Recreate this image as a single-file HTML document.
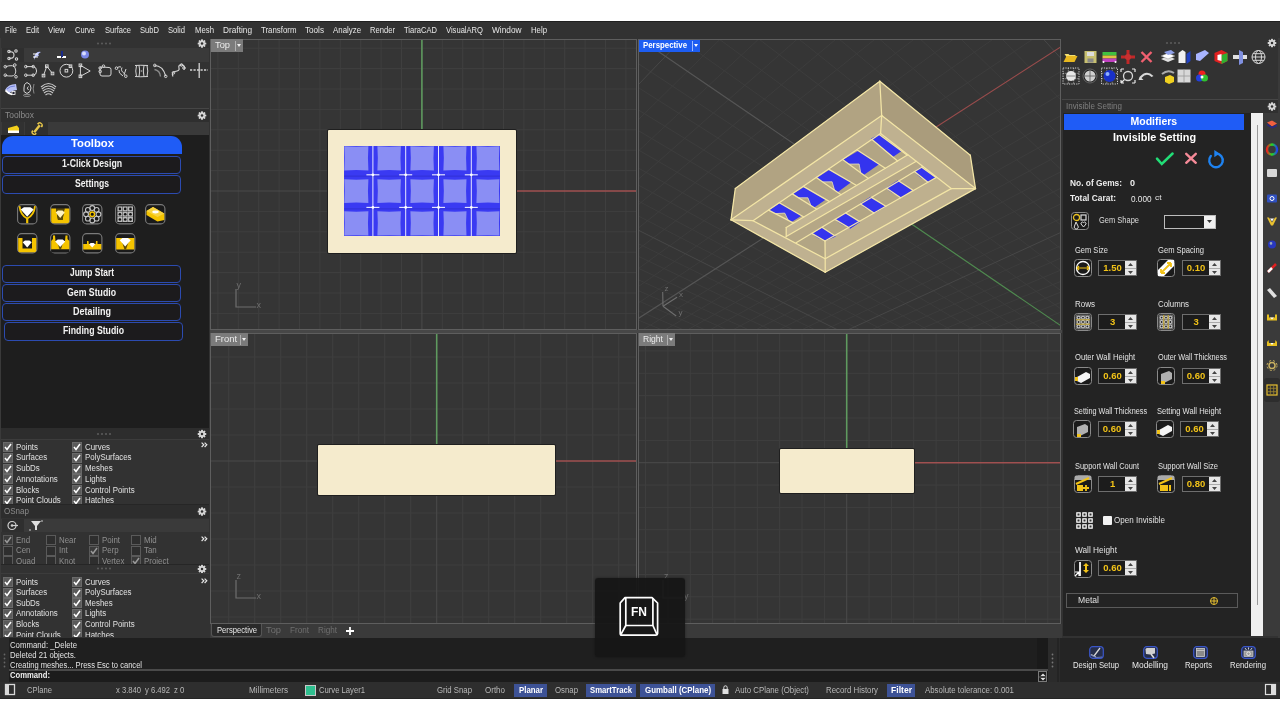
<!DOCTYPE html>
<html><head><meta charset="utf-8">
<style>
*{box-sizing:border-box;margin:0;padding:0}
html,body{width:1280px;height:720px;overflow:hidden;background:#fff}
body{position:relative;font-family:"Liberation Sans",sans-serif;color:#ddd}
.a{position:absolute}
.t{position:absolute;white-space:nowrap;line-height:1}
svg{overflow:visible}
</style></head><body><div style="position:absolute;left:0;top:0;width:1280px;height:720px;will-change:transform">
<div class="a" style="left:0px;top:21px;width:1280px;height:1px;background:#202020;"></div>
<div class="a" style="left:0px;top:22px;width:1280px;height:17px;background:#323232;"></div>
<div class="t" style="left:5.0px;top:26.0px;font-size:9px;color:#e6e6e6;transform:scaleX(0.828);transform-origin:0 0;">File</div>
<div class="t" style="left:26.0px;top:26.0px;font-size:9px;color:#e6e6e6;transform:scaleX(0.838);transform-origin:0 0;">Edit</div>
<div class="t" style="left:48.0px;top:26.0px;font-size:9px;color:#e6e6e6;transform:scaleX(0.879);transform-origin:0 0;">View</div>
<div class="t" style="left:75.0px;top:26.0px;font-size:9px;color:#e6e6e6;transform:scaleX(0.833);transform-origin:0 0;">Curve</div>
<div class="t" style="left:105.0px;top:26.0px;font-size:9px;color:#e6e6e6;transform:scaleX(0.838);transform-origin:0 0;">Surface</div>
<div class="t" style="left:140.0px;top:26.0px;font-size:9px;color:#e6e6e6;transform:scaleX(0.844);transform-origin:0 0;">SubD</div>
<div class="t" style="left:168.0px;top:26.0px;font-size:9px;color:#e6e6e6;transform:scaleX(0.849);transform-origin:0 0;">Solid</div>
<div class="t" style="left:195.0px;top:26.0px;font-size:9px;color:#e6e6e6;transform:scaleX(0.863);transform-origin:0 0;">Mesh</div>
<div class="t" style="left:223.0px;top:26.0px;font-size:9px;color:#e6e6e6;transform:scaleX(0.920);transform-origin:0 0;">Drafting</div>
<div class="t" style="left:261.0px;top:26.0px;font-size:9px;color:#e6e6e6;transform:scaleX(0.873);transform-origin:0 0;">Transform</div>
<div class="t" style="left:305.0px;top:26.0px;font-size:9px;color:#e6e6e6;transform:scaleX(0.904);transform-origin:0 0;">Tools</div>
<div class="t" style="left:333.0px;top:26.0px;font-size:9px;color:#e6e6e6;transform:scaleX(0.875);transform-origin:0 0;">Analyze</div>
<div class="t" style="left:370.0px;top:26.0px;font-size:9px;color:#e6e6e6;transform:scaleX(0.847);transform-origin:0 0;">Render</div>
<div class="t" style="left:404.0px;top:26.0px;font-size:9px;color:#e6e6e6;transform:scaleX(0.842);transform-origin:0 0;">TiaraCAD</div>
<div class="t" style="left:446.0px;top:26.0px;font-size:9px;color:#e6e6e6;transform:scaleX(0.844);transform-origin:0 0;">VisualARQ</div>
<div class="t" style="left:492.0px;top:26.0px;font-size:9px;color:#e6e6e6;transform:scaleX(0.922);transform-origin:0 0;">Window</div>
<div class="t" style="left:531.0px;top:26.0px;font-size:9px;color:#e6e6e6;transform:scaleX(0.864);transform-origin:0 0;">Help</div>
<div class="a" style="left:0px;top:39px;width:210px;height:599px;background:#323232;"></div>
<div class="a" style="left:0px;top:38px;width:1px;height:600px;background:#3a3a3a;"></div>
<svg class="a" style="left:0px;top:38px;" width="210" height="70" viewBox="0 0 210 70"><circle cx="98" cy="5.5" r="1.1" fill="#5a5a5a"/><circle cx="102" cy="5.5" r="1.1" fill="#5a5a5a"/><circle cx="106" cy="5.5" r="1.1" fill="#5a5a5a"/><circle cx="110" cy="5.5" r="1.1" fill="#5a5a5a"/><g transform="translate(202,5.5)" fill="#d6d6d6"><rect x="-1" y="-4.3" width="2" height="2.6" rx="0.6" transform="rotate(0)"/><rect x="-1" y="-4.3" width="2" height="2.6" rx="0.6" transform="rotate(45)"/><rect x="-1" y="-4.3" width="2" height="2.6" rx="0.6" transform="rotate(90)"/><rect x="-1" y="-4.3" width="2" height="2.6" rx="0.6" transform="rotate(135)"/><rect x="-1" y="-4.3" width="2" height="2.6" rx="0.6" transform="rotate(180)"/><rect x="-1" y="-4.3" width="2" height="2.6" rx="0.6" transform="rotate(225)"/><rect x="-1" y="-4.3" width="2" height="2.6" rx="0.6" transform="rotate(270)"/><rect x="-1" y="-4.3" width="2" height="2.6" rx="0.6" transform="rotate(315)"/><circle r="3.0"/><circle r="1.25" fill="#303030"/></g></svg>
<div class="a" style="left:1px;top:48px;width:208px;height:14px;background:#3a3a3a;"></div>
<div class="a" style="left:2px;top:48px;width:22px;height:14px;background:#2f2f2f;"></div>
<svg class="a" style="left:0px;top:48px;" width="100" height="14" viewBox="0 0 100 14">
<g stroke="#d8d8d8" fill="none" stroke-width="1.1">
<path d="M9 4 Q14 3 14 7 Q14 11 9 10"/><circle cx="9" cy="3.5" r="1.2"/><circle cx="16" cy="3" r="1.2"/><circle cx="9" cy="10.5" r="1.2"/><circle cx="16.5" cy="11" r="1.2"/>
</g>
<path d="M34 9 Q36 3 41 4 Q37 6 39 8 Q35 8 34 12 Z" fill="#b9c3ff"/><path d="M33 6 h5 M33 9 h5" stroke="#fff" stroke-width="1.2"/>
<rect x="57" y="8" width="4" height="2" fill="#fff"/><rect x="62" y="8" width="4" height="2" fill="#fff"/><rect x="61" y="3" width="2" height="6" fill="#1a2a8a"/>
<circle cx="85" cy="6.5" r="4" fill="#7a86e8"/><circle cx="84" cy="5.5" r="2" fill="#d8dcff"/>
</svg>
<svg class="a" style="left:0px;top:63px;" width="210" height="16" viewBox="0 0 210 16">
<g stroke="#d4d4d4" fill="none" stroke-width="1">
<path d="M5.3 3.8 Q9 2.4 12.3 2.7 Q15.8 3.5 15.8 8 Q15.6 12.6 12 13 Q8 13.2 5.3 12.4"/>
<circle cx="5.3" cy="3.7" r="1.3"/><circle cx="14.8" cy="2" r="1.3"/><circle cx="5.3" cy="12.2" r="1.3"/><circle cx="16" cy="13.8" r="1.3"/>
<path d="M25.8 3.6 H33.2 Q36.6 4 36.6 8 Q36.5 12 33.2 12.2 H25.8"/>
<circle cx="25.8" cy="3.6" r="1.3"/><circle cx="33.2" cy="3.6" r="1.3"/><circle cx="25.8" cy="12.2" r="1.3"/><circle cx="33.2" cy="12.2" r="1.3"/>
<path d="M43.5 12.6 L46.8 3.2 L52.5 10.5"/>
<rect x="42.2" y="11.3" width="2.6" height="2.6"/><rect x="45.5" y="1.9" width="2.6" height="2.6"/><rect x="51.2" y="9.2" width="2.6" height="2.6"/>
<circle cx="66.4" cy="7.7" r="6.4"/><rect x="65.1" y="6.4" width="2.6" height="2.6"/><rect x="69.2" y="1.9" width="2.6" height="2.6"/>
<path d="M80.4 2.3 L90.2 8 L80.4 13.3 Z"/><rect x="79.1" y="1" width="2.6" height="2.6"/><rect x="79.1" y="12" width="2.6" height="2.6"/>
<path d="M100 5.5 Q100 4 102 4 L109 4.5 Q111 4.5 111 6.5 L111 11 Q111 13 109 13 L102 13 Q100 13 100 11 Z"/>
<circle cx="100.2" cy="5" r="1.3"/><circle cx="100.2" cy="8.5" r="1.3"/><circle cx="103.5" cy="3.2" r="1.3"/>
<path d="M117 5 Q119 3 121 4 M119 7 Q118 10 123 13 M122 4.5 Q120 8 125 11 M126 6 L124 12"/><circle cx="116.5" cy="5.2" r="1.3"/><circle cx="125.8" cy="13.2" r="1.3"/>
<path d="M135 2.5 Q140 2 148 2.5 M135 13.5 Q140 14 148 13.5 M136.5 2.5 Q135 8 136.5 13.5 M139 2.5 Q140.5 8 139 13.5 M144 2.5 Q142.5 8 144 13.5 M147 2.5 Q148.5 8 147 13.5"/><path d="M139 8 H144" stroke-dasharray="1 1"/>
<path d="M154.5 2.5 Q163 2.5 165.7 13.2" stroke-width="1.2"/><path d="M154.5 6.5 Q160 7.5 160.5 13.5" stroke="#8a8a8a" stroke-width="1.4"/><circle cx="154.8" cy="2.4" r="1.3"/><circle cx="165.7" cy="13.3" r="1.3"/>
<path d="M173 13.5 Q171 9.5 175 8.5 Q180 8 179 5 Q178 1.5 182 1.8 Q185.5 2.5 184 6.5" stroke-width="1.2"/><circle cx="173.5" cy="9.8" r="1.3"/><circle cx="184" cy="5" r="1.3"/><circle cx="181.5" cy="2" r="1.3"/>
<path d="M199.2 0 V15" stroke-width="1.3"/><path d="M190 7 H208" stroke-dasharray="2.2 1.3" stroke-width="1.3"/>
</g></svg>
<svg class="a" style="left:3px;top:80.5px;" width="100" height="16" viewBox="0 0 100 16">
<path d="M2 9 Q5 3 13 3 L14 9 Q8 9.5 6 13 Z" fill="#b8c0f4"/><path d="M2.5 9.5 Q5 12.5 9 13.5" stroke="#ffffff" stroke-width="1.8" fill="none"/><path d="M4 8 Q7 5 12 5" stroke="#6070d0" stroke-width="0.8" fill="none"/><rect x="9" y="10.5" width="3" height="3" fill="#223" stroke="#fff" stroke-width="0.8"/>
<g stroke="#d4d4d4" fill="none" stroke-width="1"><path d="M24 1.5 L27 3.5 L28 7 L27 10.5 L24 12.5 L21 10.5 L21 7 L21.5 3.5 Z"/><path d="M25.5 5.5 Q23 7 25.5 9"/><ellipse cx="24" cy="14.3" rx="3.5" ry="1.1" stroke="#999"/><path d="M31 3 Q29.3 8 31 12.5" stroke="#888"/></g>
<g stroke="#c8c8c8" fill="none" stroke-width="1.1"><path d="M38 6 Q45.5 -1 53 6"/><path d="M38.8 8 Q45.5 2 52.2 8"/><path d="M39.8 10 Q45.5 5 51.2 10"/><path d="M41 12 Q45.5 8 50 12"/><path d="M42.5 14 Q45.5 11.5 48.5 14"/></g>
</svg>
<div class="a" style="left:1px;top:108px;width:208px;height:1px;background:#464646;"></div>
<div class="a" style="left:1px;top:109px;width:208px;height:13px;background:#2f2f2f;"></div>
<div class="t" style="left:5.0px;top:110.7px;font-size:9px;color:#8a8a8a;transform:scaleX(0.935);transform-origin:0 0;">Toolbox</div>
<svg class="a" style="left:0px;top:108px;" width="210" height="14" viewBox="0 0 210 14"><g transform="translate(202,7.5)" fill="#d6d6d6"><rect x="-1" y="-4.3" width="2" height="2.6" rx="0.6" transform="rotate(0)"/><rect x="-1" y="-4.3" width="2" height="2.6" rx="0.6" transform="rotate(45)"/><rect x="-1" y="-4.3" width="2" height="2.6" rx="0.6" transform="rotate(90)"/><rect x="-1" y="-4.3" width="2" height="2.6" rx="0.6" transform="rotate(135)"/><rect x="-1" y="-4.3" width="2" height="2.6" rx="0.6" transform="rotate(180)"/><rect x="-1" y="-4.3" width="2" height="2.6" rx="0.6" transform="rotate(225)"/><rect x="-1" y="-4.3" width="2" height="2.6" rx="0.6" transform="rotate(270)"/><rect x="-1" y="-4.3" width="2" height="2.6" rx="0.6" transform="rotate(315)"/><circle r="3.0"/><circle r="1.25" fill="#303030"/></g></svg>
<div class="a" style="left:1px;top:122px;width:208px;height:13px;background:#3a3a3a;"></div>
<div class="a" style="left:2px;top:122px;width:22px;height:13px;background:#313131;"></div>
<div class="a" style="left:25px;top:122px;width:23px;height:13px;background:#2f2f2f;"></div>
<svg class="a" style="left:0px;top:122px;" width="60" height="13" viewBox="0 0 60 13">
<path d="M8 6 L17 3.5 L19 6 L19 9 L8 9 Z" fill="#f3cf1c"/><rect x="8" y="8.5" width="11" height="2.5" fill="#fff"/>
<g transform="translate(37,6.8) rotate(-52)"><rect x="-4.5" y="-1.2" width="9" height="2.4" fill="#e6c64a"/><path d="M4 -3.2 Q7.5 -3.2 7.5 0 Q7.5 3.2 4 3.2 L4 1.3 L6 1.3 L6 -1.3 L4 -1.3 Z" fill="#e6c64a"/><path d="M-4 -3 Q-7.2 -3 -7.2 0 Q-7.2 3 -4 3 L-4 1.2 L-5.6 1.2 L-5.6 -1.2 L-4 -1.2 Z" fill="#e6c64a"/></g>
</svg>
<div class="a" style="left:1px;top:135px;width:208px;height:293px;background:#1e1e1e;"></div>
<div class="a" style="left:2px;top:136px;width:180px;height:18px;background:#1f5cf6;border-radius:11px 11px 0 0"></div>
<div class="t" style="left:70.5px;top:138.2px;font-size:11px;color:#ffffff;font-weight:bold;transform:scaleX(1.025);transform-origin:0 0;">Toolbox</div>
<div class="a" style="left:2px;top:155.5px;width:179px;height:18.5px;background:#1c1b1d;border:1px solid #2c4bb0;border-radius:4px"></div>
<div class="t" style="left:61.5px;top:159.4px;font-size:10px;color:#f2f2f2;font-weight:bold;transform:scaleX(0.871);transform-origin:0 0;">1-Click Design</div>
<div class="a" style="left:2px;top:175px;width:179px;height:19px;background:#1c1b1d;border:1px solid #2c4bb0;border-radius:4px"></div>
<div class="t" style="left:74.5px;top:179.2px;font-size:10px;color:#f2f2f2;font-weight:bold;transform:scaleX(0.862);transform-origin:0 0;">Settings</div>
<svg class="a" style="left:17px;top:203.5px;" width="21" height="21" viewBox="0 0 21 21"><rect x="0.6" y="0.6" width="19.3" height="19.3" rx="4" fill="#1a1a1a" stroke="#7a7a7a" stroke-width="1.1"/><path d="M2.5 2.2 Q3.5 11.5 10.2 14.5 Q17 11.5 18 2.2" stroke="#f5c400" stroke-width="1.8" fill="none"/><path d="M10.2 14 V19.2" stroke="#f5c400" stroke-width="2.2"/><path d="M3.6999999999999993 5.575 L6.949999999999999 3.2 L13.45 3.2 L16.7 5.575 L10.2 12.7 Z" fill="#ffffff"/></svg>
<svg class="a" style="left:50px;top:203.5px;" width="21" height="21" viewBox="0 0 21 21"><rect x="0.6" y="0.6" width="19.3" height="19.3" rx="4" fill="#1a1a1a" stroke="#7a7a7a" stroke-width="1.1"/><path d="M1.2 4.5 H6 L8 16 H12.5 L14.5 4.5 H19.3 V17 Q19.3 19.3 17 19.3 H3.5 Q1.2 19.3 1.2 17 Z" fill="#f5c400"/><path d="M6 4.5 H14.5 L12.5 16 H8 Z" fill="#5c4a0a"/><path d="M5.699999999999999 8.375 L7.949999999999999 6.5 L12.45 6.5 L14.7 8.375 L10.2 14.0 Z" fill="#fff3c0"/></svg>
<svg class="a" style="left:82px;top:203.5px;" width="21" height="21" viewBox="0 0 21 21"><rect x="0.6" y="0.6" width="19.3" height="19.3" rx="4" fill="#1a1a1a" stroke="#7a7a7a" stroke-width="1.1"/><circle cx="16.45" cy="10.25" r="2.4" fill="none" stroke="#c4c4c4" stroke-width="1.1"/><circle cx="14.63" cy="14.63" r="2.4" fill="none" stroke="#c4c4c4" stroke-width="1.1"/><circle cx="10.25" cy="16.45" r="2.4" fill="none" stroke="#c4c4c4" stroke-width="1.1"/><circle cx="5.87" cy="14.63" r="2.4" fill="none" stroke="#c4c4c4" stroke-width="1.1"/><circle cx="4.05" cy="10.25" r="2.4" fill="none" stroke="#c4c4c4" stroke-width="1.1"/><circle cx="5.87" cy="5.87" r="2.4" fill="none" stroke="#c4c4c4" stroke-width="1.1"/><circle cx="10.25" cy="4.05" r="2.4" fill="none" stroke="#c4c4c4" stroke-width="1.1"/><circle cx="14.63" cy="5.87" r="2.4" fill="none" stroke="#c4c4c4" stroke-width="1.1"/><circle cx="10.25" cy="10.25" r="2.3" fill="#111" stroke="#f5c400" stroke-width="1.4"/></svg>
<svg class="a" style="left:115px;top:203.5px;" width="21" height="21" viewBox="0 0 21 21"><rect x="0.6" y="0.6" width="19.3" height="19.3" rx="4" fill="#1a1a1a" stroke="#7a7a7a" stroke-width="1.1"/><rect x="2.4" y="2.4" width="5" height="5" fill="#b8b8b8"/><circle cx="4.9" cy="4.9" r="1.3" fill="#111"/><rect x="2.4" y="7.7" width="5" height="5" fill="#b8b8b8"/><circle cx="4.9" cy="10.2" r="1.3" fill="#111"/><rect x="2.4" y="13.0" width="5" height="5" fill="#b8b8b8"/><circle cx="4.9" cy="15.5" r="1.3" fill="#111"/><rect x="7.7" y="2.4" width="5" height="5" fill="#b8b8b8"/><circle cx="10.2" cy="4.9" r="1.3" fill="#111"/><rect x="7.7" y="7.7" width="5" height="5" fill="#b8b8b8"/><circle cx="10.2" cy="10.2" r="1.3" fill="#111"/><rect x="7.7" y="13.0" width="5" height="5" fill="#b8b8b8"/><circle cx="10.2" cy="15.5" r="1.3" fill="#111"/><rect x="13.0" y="2.4" width="5" height="5" fill="#b8b8b8"/><circle cx="15.5" cy="4.9" r="1.3" fill="#111"/><rect x="13.0" y="7.7" width="5" height="5" fill="#b8b8b8"/><circle cx="15.5" cy="10.2" r="1.3" fill="#111"/><rect x="13.0" y="13.0" width="5" height="5" fill="#b8b8b8"/><circle cx="15.5" cy="15.5" r="1.3" fill="#111"/></svg>
<svg class="a" style="left:145px;top:203.5px;" width="21" height="21" viewBox="0 0 21 21"><rect x="0.6" y="0.6" width="19.3" height="19.3" rx="4" fill="#1a1a1a" stroke="#7a7a7a" stroke-width="1.1"/><path d="M1.5 7 L8 3 L19.3 9.5 L19.3 16 L12.5 17.5 L1.5 11 Z" fill="#f5c400"/><path d="M1.5 7 L8 3 L19.3 9.5 L12.5 13 Z" fill="#f8d440"/><ellipse cx="10.5" cy="8" rx="3.2" ry="1.4" fill="#fff"/></svg>
<svg class="a" style="left:17px;top:232.5px;" width="21" height="21" viewBox="0 0 21 21"><rect x="0.6" y="0.6" width="19.3" height="19.3" rx="4" fill="#1a1a1a" stroke="#7a7a7a" stroke-width="1.1"/><path d="M1.2 5 H5.5 V15.5 H15 V5 H19.3 V17.5 Q19.3 19.3 17.5 19.3 H3 Q1.2 19.3 1.2 17.5 Z" fill="#f5c400"/><path d="M5.699999999999999 9.25 L7.949999999999999 7.5 L12.45 7.5 L14.7 9.25 L10.2 14.5 Z" fill="#ffffff"/></svg>
<svg class="a" style="left:50px;top:232.5px;" width="21" height="21" viewBox="0 0 21 21"><rect x="0.6" y="0.6" width="19.3" height="19.3" rx="4" fill="#1a1a1a" stroke="#7a7a7a" stroke-width="1.1"/><path d="M1.2 16.5 V8 L3 6 L3 2.5 L5 2.5 L5.5 8 H15 L15.5 2.5 L17.5 2.5 L17.5 6 L19.3 8 V16.5 Z" fill="#f5c400"/><path d="M7 8 H13.5 L11 16.5 H9.5 Z" fill="#5c4a0a"/><path d="M5.199999999999999 8.375 L7.699999999999999 6.5 L12.7 6.5 L15.2 8.375 L10.2 14.0 Z" fill="#ffffff"/><rect x="1.2" y="16.5" width="18.1" height="2.8" fill="#1a1a1a"/></svg>
<svg class="a" style="left:82px;top:232.5px;" width="21" height="21" viewBox="0 0 21 21"><rect x="0.6" y="0.6" width="19.3" height="19.3" rx="4" fill="#1a1a1a" stroke="#7a7a7a" stroke-width="1.1"/><path d="M1.2 11 H5 L5 8 L6.5 8 L6.8 11 H13.7 L14 8 L15.5 8 L15.5 11 H19.3 V16.5 H1.2 Z" fill="#f5c400"/><path d="M7.199999999999999 11.125 L8.7 10 L11.7 10 L13.2 11.125 L10.2 14.5 Z" fill="#ffffff"/></svg>
<svg class="a" style="left:115px;top:232.5px;" width="21" height="21" viewBox="0 0 21 21"><rect x="0.6" y="0.6" width="19.3" height="19.3" rx="4" fill="#1a1a1a" stroke="#7a7a7a" stroke-width="1.1"/><path d="M1.2 5 H19.3 V16.5 H1.2 Z" fill="#f5c400"/><path d="M7 9 H13.5 L11 16.5 H9.5 Z" fill="#5c4a0a"/><path d="M4.699999999999999 7.125 L7.449999999999999 5 L12.95 5 L15.7 7.125 L10.2 13.5 Z" fill="#ffffff"/></svg>
<div class="a" style="left:2px;top:264.5px;width:179px;height:18.5px;background:#1c1b1d;border:1px solid #2c4bb0;border-radius:4px"></div>
<div class="t" style="left:69.5px;top:268.4px;font-size:10px;color:#f2f2f2;font-weight:bold;transform:scaleX(0.842);transform-origin:0 0;">Jump Start</div>
<div class="a" style="left:2px;top:284px;width:179px;height:18px;background:#1c1b1d;border:1px solid #2c4bb0;border-radius:4px"></div>
<div class="t" style="left:67.0px;top:287.7px;font-size:10px;color:#f2f2f2;font-weight:bold;transform:scaleX(0.873);transform-origin:0 0;">Gem Studio</div>
<div class="a" style="left:2px;top:303px;width:179px;height:18px;background:#1c1b1d;border:1px solid #2c4bb0;border-radius:4px"></div>
<div class="t" style="left:72.5px;top:306.7px;font-size:10px;color:#f2f2f2;font-weight:bold;transform:scaleX(0.900);transform-origin:0 0;">Detailing</div>
<div class="a" style="left:4px;top:322px;width:179px;height:19px;background:#1c1b1d;border:1px solid #2c4bb0;border-radius:4px"></div>
<div class="t" style="left:63.0px;top:326.2px;font-size:10px;color:#f2f2f2;font-weight:bold;transform:scaleX(0.872);transform-origin:0 0;">Finding Studio</div>
<div class="a" style="left:1px;top:428px;width:208px;height:11px;background:#2d2d2d;"></div>
<svg class="a" style="left:0px;top:428px;" width="210" height="12" viewBox="0 0 210 12"><circle cx="98" cy="6" r="1.1" fill="#5a5a5a"/><circle cx="102" cy="6" r="1.1" fill="#5a5a5a"/><circle cx="106" cy="6" r="1.1" fill="#5a5a5a"/><circle cx="110" cy="6" r="1.1" fill="#5a5a5a"/><g transform="translate(202,6)" fill="#d6d6d6"><rect x="-1" y="-4.3" width="2" height="2.6" rx="0.6" transform="rotate(0)"/><rect x="-1" y="-4.3" width="2" height="2.6" rx="0.6" transform="rotate(45)"/><rect x="-1" y="-4.3" width="2" height="2.6" rx="0.6" transform="rotate(90)"/><rect x="-1" y="-4.3" width="2" height="2.6" rx="0.6" transform="rotate(135)"/><rect x="-1" y="-4.3" width="2" height="2.6" rx="0.6" transform="rotate(180)"/><rect x="-1" y="-4.3" width="2" height="2.6" rx="0.6" transform="rotate(225)"/><rect x="-1" y="-4.3" width="2" height="2.6" rx="0.6" transform="rotate(270)"/><rect x="-1" y="-4.3" width="2" height="2.6" rx="0.6" transform="rotate(315)"/><circle r="3.0"/><circle r="1.25" fill="#303030"/></g></svg>
<div class="a" style="left:1px;top:439px;width:208px;height:1px;background:#3c3c3c;"></div>
<svg class="a" style="left:3px;top:442.2px;" width="10" height="10" viewBox="0 0 10 10"><rect x="0.5" y="0.5" width="9" height="9" fill="#5a5a5a" stroke="#6a6a6a" stroke-width="1"/><path d="M2 5 L4 7.5 L8 2" stroke="#ffffff" stroke-width="1.5" fill="none"/></svg>
<svg class="a" style="left:72px;top:442.2px;" width="10" height="10" viewBox="0 0 10 10"><rect x="0.5" y="0.5" width="9" height="9" fill="#5a5a5a" stroke="#6a6a6a" stroke-width="1"/><path d="M2 5 L4 7.5 L8 2" stroke="#ffffff" stroke-width="1.5" fill="none"/></svg>
<div class="t" style="left:16.0px;top:442.7px;font-size:8.5px;color:#e0e0e0;transform:scaleX(0.930);transform-origin:0 0;">Points</div>
<div class="t" style="left:85.0px;top:442.7px;font-size:8.5px;color:#e0e0e0;transform:scaleX(0.930);transform-origin:0 0;">Curves</div>
<svg class="a" style="left:3px;top:452.9px;" width="10" height="10" viewBox="0 0 10 10"><rect x="0.5" y="0.5" width="9" height="9" fill="#5a5a5a" stroke="#6a6a6a" stroke-width="1"/><path d="M2 5 L4 7.5 L8 2" stroke="#ffffff" stroke-width="1.5" fill="none"/></svg>
<svg class="a" style="left:72px;top:452.9px;" width="10" height="10" viewBox="0 0 10 10"><rect x="0.5" y="0.5" width="9" height="9" fill="#5a5a5a" stroke="#6a6a6a" stroke-width="1"/><path d="M2 5 L4 7.5 L8 2" stroke="#ffffff" stroke-width="1.5" fill="none"/></svg>
<div class="t" style="left:16.0px;top:453.4px;font-size:8.5px;color:#e0e0e0;transform:scaleX(0.930);transform-origin:0 0;">Surfaces</div>
<div class="t" style="left:85.0px;top:453.4px;font-size:8.5px;color:#e0e0e0;transform:scaleX(0.930);transform-origin:0 0;">PolySurfaces</div>
<svg class="a" style="left:3px;top:463.59999999999997px;" width="10" height="10" viewBox="0 0 10 10"><rect x="0.5" y="0.5" width="9" height="9" fill="#5a5a5a" stroke="#6a6a6a" stroke-width="1"/><path d="M2 5 L4 7.5 L8 2" stroke="#ffffff" stroke-width="1.5" fill="none"/></svg>
<svg class="a" style="left:72px;top:463.59999999999997px;" width="10" height="10" viewBox="0 0 10 10"><rect x="0.5" y="0.5" width="9" height="9" fill="#5a5a5a" stroke="#6a6a6a" stroke-width="1"/><path d="M2 5 L4 7.5 L8 2" stroke="#ffffff" stroke-width="1.5" fill="none"/></svg>
<div class="t" style="left:16.0px;top:464.1px;font-size:8.5px;color:#e0e0e0;transform:scaleX(0.930);transform-origin:0 0;">SubDs</div>
<div class="t" style="left:85.0px;top:464.1px;font-size:8.5px;color:#e0e0e0;transform:scaleX(0.930);transform-origin:0 0;">Meshes</div>
<svg class="a" style="left:3px;top:474.29999999999995px;" width="10" height="10" viewBox="0 0 10 10"><rect x="0.5" y="0.5" width="9" height="9" fill="#5a5a5a" stroke="#6a6a6a" stroke-width="1"/><path d="M2 5 L4 7.5 L8 2" stroke="#ffffff" stroke-width="1.5" fill="none"/></svg>
<svg class="a" style="left:72px;top:474.29999999999995px;" width="10" height="10" viewBox="0 0 10 10"><rect x="0.5" y="0.5" width="9" height="9" fill="#5a5a5a" stroke="#6a6a6a" stroke-width="1"/><path d="M2 5 L4 7.5 L8 2" stroke="#ffffff" stroke-width="1.5" fill="none"/></svg>
<div class="t" style="left:16.0px;top:474.8px;font-size:8.5px;color:#e0e0e0;transform:scaleX(0.930);transform-origin:0 0;">Annotations</div>
<div class="t" style="left:85.0px;top:474.8px;font-size:8.5px;color:#e0e0e0;transform:scaleX(0.930);transform-origin:0 0;">Lights</div>
<svg class="a" style="left:3px;top:485.0px;" width="10" height="10" viewBox="0 0 10 10"><rect x="0.5" y="0.5" width="9" height="9" fill="#5a5a5a" stroke="#6a6a6a" stroke-width="1"/><path d="M2 5 L4 7.5 L8 2" stroke="#ffffff" stroke-width="1.5" fill="none"/></svg>
<svg class="a" style="left:72px;top:485.0px;" width="10" height="10" viewBox="0 0 10 10"><rect x="0.5" y="0.5" width="9" height="9" fill="#5a5a5a" stroke="#6a6a6a" stroke-width="1"/><path d="M2 5 L4 7.5 L8 2" stroke="#ffffff" stroke-width="1.5" fill="none"/></svg>
<div class="t" style="left:16.0px;top:485.5px;font-size:8.5px;color:#e0e0e0;transform:scaleX(0.930);transform-origin:0 0;">Blocks</div>
<div class="t" style="left:85.0px;top:485.5px;font-size:8.5px;color:#e0e0e0;transform:scaleX(0.930);transform-origin:0 0;">Control Points</div>
<svg class="a" style="left:3px;top:495.7px;" width="10" height="10" viewBox="0 0 10 10"><rect x="0.5" y="0.5" width="9" height="9" fill="#5a5a5a" stroke="#6a6a6a" stroke-width="1"/><path d="M2 5 L4 7.5 L8 2" stroke="#ffffff" stroke-width="1.5" fill="none"/></svg>
<svg class="a" style="left:72px;top:495.7px;" width="10" height="10" viewBox="0 0 10 10"><rect x="0.5" y="0.5" width="9" height="9" fill="#5a5a5a" stroke="#6a6a6a" stroke-width="1"/><path d="M2 5 L4 7.5 L8 2" stroke="#ffffff" stroke-width="1.5" fill="none"/></svg>
<div class="t" style="left:16.0px;top:496.2px;font-size:8.5px;color:#e0e0e0;transform:scaleX(0.930);transform-origin:0 0;">Point Clouds</div>
<div class="t" style="left:85.0px;top:496.2px;font-size:8.5px;color:#e0e0e0;transform:scaleX(0.930);transform-origin:0 0;">Hatches</div>
<svg class="a" style="left:200.5px;top:441.5px;" width="8" height="6" viewBox="0 0 8 6"><path d="M0.6 0.6 L2.8 2.8 L0.6 5 M3.6 0.6 L5.8 2.8 L3.6 5" stroke="#e8e8e8" stroke-width="1.2" fill="none"/></svg>
<div class="a" style="left:1px;top:504px;width:208px;height:1px;background:#262626;"></div>
<div class="a" style="left:1px;top:505px;width:208px;height:13px;background:#2d2d2d;"></div>
<div class="t" style="left:4.0px;top:506.7px;font-size:9px;color:#8a8a8a;transform:scaleX(0.892);transform-origin:0 0;">OSnap</div>
<svg class="a" style="left:0px;top:505px;" width="210" height="13" viewBox="0 0 210 13"><g transform="translate(202,6.5)" fill="#d6d6d6"><rect x="-1" y="-4.3" width="2" height="2.6" rx="0.6" transform="rotate(0)"/><rect x="-1" y="-4.3" width="2" height="2.6" rx="0.6" transform="rotate(45)"/><rect x="-1" y="-4.3" width="2" height="2.6" rx="0.6" transform="rotate(90)"/><rect x="-1" y="-4.3" width="2" height="2.6" rx="0.6" transform="rotate(135)"/><rect x="-1" y="-4.3" width="2" height="2.6" rx="0.6" transform="rotate(180)"/><rect x="-1" y="-4.3" width="2" height="2.6" rx="0.6" transform="rotate(225)"/><rect x="-1" y="-4.3" width="2" height="2.6" rx="0.6" transform="rotate(270)"/><rect x="-1" y="-4.3" width="2" height="2.6" rx="0.6" transform="rotate(315)"/><circle r="3.0"/><circle r="1.25" fill="#303030"/></g></svg>
<div class="a" style="left:1px;top:519px;width:208px;height:13px;background:#3a3a3a;"></div>
<div class="a" style="left:2px;top:519px;width:22px;height:13px;background:#2f2f2f;"></div>
<svg class="a" style="left:0px;top:519px;" width="60" height="13" viewBox="0 0 60 13">
<g stroke="#d0d0d0" fill="none" stroke-width="1.2"><circle cx="12" cy="6.5" r="4"/><path d="M12 6.5 H18"/></g><circle cx="12" cy="6.5" r="1.3" fill="#d0d0d0"/>
<path d="M31 2 H41 L37 7 V11 H35 V7 Z" fill="#e0e0e0"/><circle cx="42" cy="2" r="0.8" fill="#e0e0e0"/><circle cx="30" cy="11" r="0.8" fill="#e0e0e0"/>
</svg>
<div class="a" style="left:0;top:533px;width:210px;height:31px;overflow:hidden">
<svg class="a" style="left:3px;top:2.0px;" width="10" height="10" viewBox="0 0 10 10"><rect x="0.5" y="0.5" width="9" height="9" fill="#3a3a3a" stroke="#5a5a5a" stroke-width="1"/><path d="M2 5 L4 7.5 L8 2" stroke="#9a9a9a" stroke-width="1.5" fill="none"/></svg>
<div class="t" style="left:16.0px;top:2.5px;font-size:8.5px;color:#8f8f8f;transform:scaleX(0.930);transform-origin:0 0;">End</div>
<svg class="a" style="left:46px;top:2.0px;" width="10" height="10" viewBox="0 0 10 10"><rect x="0.5" y="0.5" width="9" height="9" fill="#2e2e2e" stroke="#5a5a5a" stroke-width="1"/></svg>
<div class="t" style="left:59.0px;top:2.5px;font-size:8.5px;color:#8f8f8f;transform:scaleX(0.930);transform-origin:0 0;">Near</div>
<svg class="a" style="left:88.5px;top:2.0px;" width="10" height="10" viewBox="0 0 10 10"><rect x="0.5" y="0.5" width="9" height="9" fill="#2e2e2e" stroke="#5a5a5a" stroke-width="1"/></svg>
<div class="t" style="left:101.5px;top:2.5px;font-size:8.5px;color:#8f8f8f;transform:scaleX(0.930);transform-origin:0 0;">Point</div>
<svg class="a" style="left:131px;top:2.0px;" width="10" height="10" viewBox="0 0 10 10"><rect x="0.5" y="0.5" width="9" height="9" fill="#2e2e2e" stroke="#5a5a5a" stroke-width="1"/></svg>
<div class="t" style="left:144.0px;top:2.5px;font-size:8.5px;color:#8f8f8f;transform:scaleX(0.930);transform-origin:0 0;">Mid</div>
<svg class="a" style="left:3px;top:12.700000000000045px;" width="10" height="10" viewBox="0 0 10 10"><rect x="0.5" y="0.5" width="9" height="9" fill="#2e2e2e" stroke="#5a5a5a" stroke-width="1"/></svg>
<div class="t" style="left:16.0px;top:13.2px;font-size:8.5px;color:#8f8f8f;transform:scaleX(0.930);transform-origin:0 0;">Cen</div>
<svg class="a" style="left:46px;top:12.700000000000045px;" width="10" height="10" viewBox="0 0 10 10"><rect x="0.5" y="0.5" width="9" height="9" fill="#2e2e2e" stroke="#5a5a5a" stroke-width="1"/></svg>
<div class="t" style="left:59.0px;top:13.2px;font-size:8.5px;color:#8f8f8f;transform:scaleX(0.930);transform-origin:0 0;">Int</div>
<svg class="a" style="left:88.5px;top:12.700000000000045px;" width="10" height="10" viewBox="0 0 10 10"><rect x="0.5" y="0.5" width="9" height="9" fill="#3a3a3a" stroke="#5a5a5a" stroke-width="1"/><path d="M2 5 L4 7.5 L8 2" stroke="#9a9a9a" stroke-width="1.5" fill="none"/></svg>
<div class="t" style="left:101.5px;top:13.2px;font-size:8.5px;color:#8f8f8f;transform:scaleX(0.930);transform-origin:0 0;">Perp</div>
<svg class="a" style="left:131px;top:12.700000000000045px;" width="10" height="10" viewBox="0 0 10 10"><rect x="0.5" y="0.5" width="9" height="9" fill="#2e2e2e" stroke="#5a5a5a" stroke-width="1"/></svg>
<div class="t" style="left:144.0px;top:13.2px;font-size:8.5px;color:#8f8f8f;transform:scaleX(0.930);transform-origin:0 0;">Tan</div>
<svg class="a" style="left:3px;top:23.399999999999977px;" width="10" height="10" viewBox="0 0 10 10"><rect x="0.5" y="0.5" width="9" height="9" fill="#2e2e2e" stroke="#5a5a5a" stroke-width="1"/></svg>
<div class="t" style="left:16.0px;top:23.9px;font-size:8.5px;color:#8f8f8f;transform:scaleX(0.930);transform-origin:0 0;">Quad</div>
<svg class="a" style="left:46px;top:23.399999999999977px;" width="10" height="10" viewBox="0 0 10 10"><rect x="0.5" y="0.5" width="9" height="9" fill="#2e2e2e" stroke="#5a5a5a" stroke-width="1"/></svg>
<div class="t" style="left:59.0px;top:23.9px;font-size:8.5px;color:#8f8f8f;transform:scaleX(0.930);transform-origin:0 0;">Knot</div>
<svg class="a" style="left:88.5px;top:23.399999999999977px;" width="10" height="10" viewBox="0 0 10 10"><rect x="0.5" y="0.5" width="9" height="9" fill="#2e2e2e" stroke="#5a5a5a" stroke-width="1"/></svg>
<div class="t" style="left:101.5px;top:23.9px;font-size:8.5px;color:#8f8f8f;transform:scaleX(0.930);transform-origin:0 0;">Vertex</div>
<svg class="a" style="left:131px;top:23.399999999999977px;" width="10" height="10" viewBox="0 0 10 10"><rect x="0.5" y="0.5" width="9" height="9" fill="#3a3a3a" stroke="#5a5a5a" stroke-width="1"/><path d="M2 5 L4 7.5 L8 2" stroke="#9a9a9a" stroke-width="1.5" fill="none"/></svg>
<div class="t" style="left:144.0px;top:23.9px;font-size:8.5px;color:#8f8f8f;transform:scaleX(0.930);transform-origin:0 0;">Project</div>
</div>
<svg class="a" style="left:200.5px;top:535.5px;" width="8" height="6" viewBox="0 0 8 6"><path d="M0.6 0.6 L2.8 2.8 L0.6 5 M3.6 0.6 L5.8 2.8 L3.6 5" stroke="#e8e8e8" stroke-width="1.2" fill="none"/></svg>
<div class="a" style="left:1px;top:564px;width:208px;height:1px;background:#262626;"></div>
<svg class="a" style="left:0px;top:564px;" width="210" height="10" viewBox="0 0 210 10"><circle cx="98" cy="4.5" r="1.1" fill="#5a5a5a"/><circle cx="102" cy="4.5" r="1.1" fill="#5a5a5a"/><circle cx="106" cy="4.5" r="1.1" fill="#5a5a5a"/><circle cx="110" cy="4.5" r="1.1" fill="#5a5a5a"/><g transform="translate(202,5)" fill="#d6d6d6"><rect x="-1" y="-4.3" width="2" height="2.6" rx="0.6" transform="rotate(0)"/><rect x="-1" y="-4.3" width="2" height="2.6" rx="0.6" transform="rotate(45)"/><rect x="-1" y="-4.3" width="2" height="2.6" rx="0.6" transform="rotate(90)"/><rect x="-1" y="-4.3" width="2" height="2.6" rx="0.6" transform="rotate(135)"/><rect x="-1" y="-4.3" width="2" height="2.6" rx="0.6" transform="rotate(180)"/><rect x="-1" y="-4.3" width="2" height="2.6" rx="0.6" transform="rotate(225)"/><rect x="-1" y="-4.3" width="2" height="2.6" rx="0.6" transform="rotate(270)"/><rect x="-1" y="-4.3" width="2" height="2.6" rx="0.6" transform="rotate(315)"/><circle r="3.0"/><circle r="1.25" fill="#303030"/></g></svg>
<div class="a" style="left:1px;top:573px;width:208px;height:1px;background:#3c3c3c;"></div>
<div class="a" style="left:0;top:574px;width:210px;height:63px;overflow:hidden">
<svg class="a" style="left:3px;top:3.0px;" width="10" height="10" viewBox="0 0 10 10"><rect x="0.5" y="0.5" width="9" height="9" fill="#5a5a5a" stroke="#6a6a6a" stroke-width="1"/><path d="M2 5 L4 7.5 L8 2" stroke="#ffffff" stroke-width="1.5" fill="none"/></svg>
<svg class="a" style="left:72px;top:3.0px;" width="10" height="10" viewBox="0 0 10 10"><rect x="0.5" y="0.5" width="9" height="9" fill="#5a5a5a" stroke="#6a6a6a" stroke-width="1"/><path d="M2 5 L4 7.5 L8 2" stroke="#ffffff" stroke-width="1.5" fill="none"/></svg>
<div class="t" style="left:16.0px;top:3.5px;font-size:8.5px;color:#e0e0e0;transform:scaleX(0.930);transform-origin:0 0;">Points</div>
<div class="t" style="left:85.0px;top:3.5px;font-size:8.5px;color:#e0e0e0;transform:scaleX(0.930);transform-origin:0 0;">Curves</div>
<svg class="a" style="left:3px;top:13.649999999999977px;" width="10" height="10" viewBox="0 0 10 10"><rect x="0.5" y="0.5" width="9" height="9" fill="#5a5a5a" stroke="#6a6a6a" stroke-width="1"/><path d="M2 5 L4 7.5 L8 2" stroke="#ffffff" stroke-width="1.5" fill="none"/></svg>
<svg class="a" style="left:72px;top:13.649999999999977px;" width="10" height="10" viewBox="0 0 10 10"><rect x="0.5" y="0.5" width="9" height="9" fill="#5a5a5a" stroke="#6a6a6a" stroke-width="1"/><path d="M2 5 L4 7.5 L8 2" stroke="#ffffff" stroke-width="1.5" fill="none"/></svg>
<div class="t" style="left:16.0px;top:14.1px;font-size:8.5px;color:#e0e0e0;transform:scaleX(0.930);transform-origin:0 0;">Surfaces</div>
<div class="t" style="left:85.0px;top:14.1px;font-size:8.5px;color:#e0e0e0;transform:scaleX(0.930);transform-origin:0 0;">PolySurfaces</div>
<svg class="a" style="left:3px;top:24.299999999999955px;" width="10" height="10" viewBox="0 0 10 10"><rect x="0.5" y="0.5" width="9" height="9" fill="#5a5a5a" stroke="#6a6a6a" stroke-width="1"/><path d="M2 5 L4 7.5 L8 2" stroke="#ffffff" stroke-width="1.5" fill="none"/></svg>
<svg class="a" style="left:72px;top:24.299999999999955px;" width="10" height="10" viewBox="0 0 10 10"><rect x="0.5" y="0.5" width="9" height="9" fill="#5a5a5a" stroke="#6a6a6a" stroke-width="1"/><path d="M2 5 L4 7.5 L8 2" stroke="#ffffff" stroke-width="1.5" fill="none"/></svg>
<div class="t" style="left:16.0px;top:24.8px;font-size:8.5px;color:#e0e0e0;transform:scaleX(0.930);transform-origin:0 0;">SubDs</div>
<div class="t" style="left:85.0px;top:24.8px;font-size:8.5px;color:#e0e0e0;transform:scaleX(0.930);transform-origin:0 0;">Meshes</div>
<svg class="a" style="left:3px;top:34.950000000000045px;" width="10" height="10" viewBox="0 0 10 10"><rect x="0.5" y="0.5" width="9" height="9" fill="#5a5a5a" stroke="#6a6a6a" stroke-width="1"/><path d="M2 5 L4 7.5 L8 2" stroke="#ffffff" stroke-width="1.5" fill="none"/></svg>
<svg class="a" style="left:72px;top:34.950000000000045px;" width="10" height="10" viewBox="0 0 10 10"><rect x="0.5" y="0.5" width="9" height="9" fill="#5a5a5a" stroke="#6a6a6a" stroke-width="1"/><path d="M2 5 L4 7.5 L8 2" stroke="#ffffff" stroke-width="1.5" fill="none"/></svg>
<div class="t" style="left:16.0px;top:35.4px;font-size:8.5px;color:#e0e0e0;transform:scaleX(0.930);transform-origin:0 0;">Annotations</div>
<div class="t" style="left:85.0px;top:35.4px;font-size:8.5px;color:#e0e0e0;transform:scaleX(0.930);transform-origin:0 0;">Lights</div>
<svg class="a" style="left:3px;top:45.60000000000002px;" width="10" height="10" viewBox="0 0 10 10"><rect x="0.5" y="0.5" width="9" height="9" fill="#5a5a5a" stroke="#6a6a6a" stroke-width="1"/><path d="M2 5 L4 7.5 L8 2" stroke="#ffffff" stroke-width="1.5" fill="none"/></svg>
<svg class="a" style="left:72px;top:45.60000000000002px;" width="10" height="10" viewBox="0 0 10 10"><rect x="0.5" y="0.5" width="9" height="9" fill="#5a5a5a" stroke="#6a6a6a" stroke-width="1"/><path d="M2 5 L4 7.5 L8 2" stroke="#ffffff" stroke-width="1.5" fill="none"/></svg>
<div class="t" style="left:16.0px;top:46.1px;font-size:8.5px;color:#e0e0e0;transform:scaleX(0.930);transform-origin:0 0;">Blocks</div>
<div class="t" style="left:85.0px;top:46.1px;font-size:8.5px;color:#e0e0e0;transform:scaleX(0.930);transform-origin:0 0;">Control Points</div>
<svg class="a" style="left:3px;top:56.25px;" width="10" height="10" viewBox="0 0 10 10"><rect x="0.5" y="0.5" width="9" height="9" fill="#5a5a5a" stroke="#6a6a6a" stroke-width="1"/><path d="M2 5 L4 7.5 L8 2" stroke="#ffffff" stroke-width="1.5" fill="none"/></svg>
<svg class="a" style="left:72px;top:56.25px;" width="10" height="10" viewBox="0 0 10 10"><rect x="0.5" y="0.5" width="9" height="9" fill="#5a5a5a" stroke="#6a6a6a" stroke-width="1"/><path d="M2 5 L4 7.5 L8 2" stroke="#ffffff" stroke-width="1.5" fill="none"/></svg>
<div class="t" style="left:16.0px;top:56.7px;font-size:8.5px;color:#e0e0e0;transform:scaleX(0.930);transform-origin:0 0;">Point Clouds</div>
<div class="t" style="left:85.0px;top:56.7px;font-size:8.5px;color:#e0e0e0;transform:scaleX(0.930);transform-origin:0 0;">Hatches</div>
</div>
<svg class="a" style="left:200.5px;top:577.5px;" width="8" height="6" viewBox="0 0 8 6"><path d="M0.6 0.6 L2.8 2.8 L0.6 5 M3.6 0.6 L5.8 2.8 L3.6 5" stroke="#e8e8e8" stroke-width="1.2" fill="none"/></svg>
<div class="a" style="left:210px;top:39px;width:852px;height:599px;background:#323232;"></div>
<div class="a" style="left:210px;top:39px;width:427px;height:291px;background:#353535;border:1px solid #5e5e5e"></div>
<div class="a" style="left:638px;top:39px;width:423px;height:291px;background:#353535;border:1px solid #5e5e5e"></div>
<div class="a" style="left:210px;top:330px;width:852px;height:3px;background:#474747;"></div>
<div class="a" style="left:210px;top:333px;width:427px;height:291px;background:#353535;border:1px solid #5e5e5e"></div>
<div class="a" style="left:638px;top:333px;width:423px;height:291px;background:#353535;border:1px solid #5e5e5e"></div>
<svg class="a" style="left:211px;top:40px;overflow:hidden" width="425" height="289" viewBox="0 0 425 289"><g stroke="#3f3f3f" stroke-width="1"><line x1="6.90" y1="0" x2="6.90" y2="289" /><line x1="27.30" y1="0" x2="27.30" y2="289" /><line x1="47.70" y1="0" x2="47.70" y2="289" /><line x1="68.10" y1="0" x2="68.10" y2="289" /><line x1="88.50" y1="0" x2="88.50" y2="289" /><line x1="108.90" y1="0" x2="108.90" y2="289" /><line x1="129.30" y1="0" x2="129.30" y2="289" /><line x1="149.70" y1="0" x2="149.70" y2="289" /><line x1="170.10" y1="0" x2="170.10" y2="289" /><line x1="190.50" y1="0" x2="190.50" y2="289" /><line x1="231.30" y1="0" x2="231.30" y2="289" /><line x1="251.70" y1="0" x2="251.70" y2="289" /><line x1="272.10" y1="0" x2="272.10" y2="289" /><line x1="292.50" y1="0" x2="292.50" y2="289" /><line x1="312.90" y1="0" x2="312.90" y2="289" /><line x1="333.30" y1="0" x2="333.30" y2="289" /><line x1="353.70" y1="0" x2="353.70" y2="289" /><line x1="374.10" y1="0" x2="374.10" y2="289" /><line x1="394.50" y1="0" x2="394.50" y2="289" /><line x1="414.90" y1="0" x2="414.90" y2="289" /><line x1="0" y1="8.20" x2="425" y2="8.20" /><line x1="0" y1="28.60" x2="425" y2="28.60" /><line x1="0" y1="49.00" x2="425" y2="49.00" /><line x1="0" y1="69.40" x2="425" y2="69.40" /><line x1="0" y1="89.80" x2="425" y2="89.80" /><line x1="0" y1="110.20" x2="425" y2="110.20" /><line x1="0" y1="130.60" x2="425" y2="130.60" /><line x1="0" y1="171.40" x2="425" y2="171.40" /><line x1="0" y1="191.80" x2="425" y2="191.80" /><line x1="0" y1="212.20" x2="425" y2="212.20" /><line x1="0" y1="232.60" x2="425" y2="232.60" /><line x1="0" y1="253.00" x2="425" y2="253.00" /><line x1="0" y1="273.40" x2="425" y2="273.40" /></g><line x1="210.90" y1="151" x2="210.90" y2="289" stroke="#4a4a4a" stroke-width="1"/><line x1="0" y1="151.00" x2="210.89999999999998" y2="151.00" stroke="#4a4a4a" stroke-width="1"/><line x1="210.90" y1="0" x2="210.90" y2="151" stroke="#5f9a5f" stroke-width="1.6"/><line x1="210.89999999999998" y1="151.00" x2="425" y2="151.00" stroke="#a05050" stroke-width="1.6"/></svg>
<div class="a" style="left:328px;top:130px;width:188px;height:123px;background:#f5ebcd;box-shadow:0 0 0 1px #1f1f1f;border-radius:1px"></div>
<svg class="a" style="left:344px;top:146px;" width="156" height="90" viewBox="0 0 156 90"><rect x="0" y="0" width="156" height="90" fill="#3a3af2"/><rect x="0" y="29.4" width="156" height="1.6" fill="#3434e0"/><rect x="0" y="62.0" width="156" height="1.6" fill="#3434e0"/><path d="M0.30000000000001137 0.30000000000001137 Q12.3 1.2000000000000113 24.399999999999977 0.30000000000001137 Q23.49999999999998 12.4 24.399999999999977 24.400000000000006 Q12.3 23.500000000000007 0.30000000000001137 24.400000000000006 Q1.2000000000000113 12.4 0.30000000000001137 0.30000000000001137 Z" fill="#8a8ef4"/><path d="M0.30000000000001137 33.30000000000001 Q12.3 34.20000000000001 24.399999999999977 33.30000000000001 Q23.49999999999998 45.1 24.399999999999977 56.900000000000006 Q12.3 56.00000000000001 0.30000000000001137 56.900000000000006 Q1.2000000000000113 45.1 0.30000000000001137 33.30000000000001 Z" fill="#8a8ef4"/><path d="M0.30000000000001137 65.30000000000001 Q12.3 66.20000000000002 24.399999999999977 65.30000000000001 Q23.49999999999998 77.5 24.399999999999977 89.6 Q12.3 88.69999999999999 0.30000000000001137 89.6 Q1.2000000000000113 77.5 0.30000000000001137 65.30000000000001 Z" fill="#8a8ef4"/><path d="M33.39999999999998 0.30000000000001137 Q45.1 1.2000000000000113 56.89999999999998 0.30000000000001137 Q55.99999999999998 12.4 56.89999999999998 24.400000000000006 Q45.1 23.500000000000007 33.39999999999998 24.400000000000006 Q34.299999999999976 12.4 33.39999999999998 0.30000000000001137 Z" fill="#8a8ef4"/><path d="M33.39999999999998 33.30000000000001 Q45.1 34.20000000000001 56.89999999999998 33.30000000000001 Q55.99999999999998 45.1 56.89999999999998 56.900000000000006 Q45.1 56.00000000000001 33.39999999999998 56.900000000000006 Q34.299999999999976 45.1 33.39999999999998 33.30000000000001 Z" fill="#8a8ef4"/><path d="M33.39999999999998 65.30000000000001 Q45.1 66.20000000000002 56.89999999999998 65.30000000000001 Q55.99999999999998 77.5 56.89999999999998 89.6 Q45.1 88.69999999999999 33.39999999999998 89.6 Q34.299999999999976 77.5 33.39999999999998 65.30000000000001 Z" fill="#8a8ef4"/><path d="M66.39999999999998 0.30000000000001137 Q78.1 1.2000000000000113 89.89999999999998 0.30000000000001137 Q88.99999999999997 12.4 89.89999999999998 24.400000000000006 Q78.1 23.500000000000007 66.39999999999998 24.400000000000006 Q67.29999999999998 12.4 66.39999999999998 0.30000000000001137 Z" fill="#8a8ef4"/><path d="M66.39999999999998 33.30000000000001 Q78.1 34.20000000000001 89.89999999999998 33.30000000000001 Q88.99999999999997 45.1 89.89999999999998 56.900000000000006 Q78.1 56.00000000000001 66.39999999999998 56.900000000000006 Q67.29999999999998 45.1 66.39999999999998 33.30000000000001 Z" fill="#8a8ef4"/><path d="M66.39999999999998 65.30000000000001 Q78.1 66.20000000000002 89.89999999999998 65.30000000000001 Q88.99999999999997 77.5 89.89999999999998 89.6 Q78.1 88.69999999999999 66.39999999999998 89.6 Q67.29999999999998 77.5 66.39999999999998 65.30000000000001 Z" fill="#8a8ef4"/><path d="M99.39999999999998 0.30000000000001137 Q110.9 1.2000000000000113 122.5 0.30000000000001137 Q121.6 12.4 122.5 24.400000000000006 Q110.9 23.500000000000007 99.39999999999998 24.400000000000006 Q100.29999999999998 12.4 99.39999999999998 0.30000000000001137 Z" fill="#8a8ef4"/><path d="M99.39999999999998 33.30000000000001 Q110.9 34.20000000000001 122.5 33.30000000000001 Q121.6 45.1 122.5 56.900000000000006 Q110.9 56.00000000000001 99.39999999999998 56.900000000000006 Q100.29999999999998 45.1 99.39999999999998 33.30000000000001 Z" fill="#8a8ef4"/><path d="M99.39999999999998 65.30000000000001 Q110.9 66.20000000000002 122.5 65.30000000000001 Q121.6 77.5 122.5 89.6 Q110.9 88.69999999999999 99.39999999999998 89.6 Q100.29999999999998 77.5 99.39999999999998 65.30000000000001 Z" fill="#8a8ef4"/><path d="M132.39999999999998 0.30000000000001137 Q143.9 1.2000000000000113 155.39999999999998 0.30000000000001137 Q154.49999999999997 12.4 155.39999999999998 24.400000000000006 Q143.9 23.500000000000007 132.39999999999998 24.400000000000006 Q133.29999999999998 12.4 132.39999999999998 0.30000000000001137 Z" fill="#8a8ef4"/><path d="M132.39999999999998 33.30000000000001 Q143.9 34.20000000000001 155.39999999999998 33.30000000000001 Q154.49999999999997 45.1 155.39999999999998 56.900000000000006 Q143.9 56.00000000000001 132.39999999999998 56.900000000000006 Q133.29999999999998 45.1 132.39999999999998 33.30000000000001 Z" fill="#8a8ef4"/><path d="M132.39999999999998 65.30000000000001 Q143.9 66.20000000000002 155.39999999999998 65.30000000000001 Q154.49999999999997 77.5 155.39999999999998 89.6 Q143.9 88.69999999999999 132.39999999999998 89.6 Q133.29999999999998 77.5 132.39999999999998 65.30000000000001 Z" fill="#8a8ef4"/><line x1="28.9" y1="0" x2="28.9" y2="90" stroke="#e6e6ff" stroke-width="1"/><line x1="22.4" y1="28.8" x2="35.4" y2="28.8" stroke="#eeeeff" stroke-width="1.1"/><circle cx="28.9" cy="28.8" r="1.4" fill="#fff"/><line x1="22.4" y1="61.4" x2="35.4" y2="61.4" stroke="#eeeeff" stroke-width="1.1"/><circle cx="28.9" cy="61.4" r="1.4" fill="#fff"/><line x1="61.7" y1="0" x2="61.7" y2="90" stroke="#e6e6ff" stroke-width="1"/><line x1="55.2" y1="28.8" x2="68.2" y2="28.8" stroke="#eeeeff" stroke-width="1.1"/><circle cx="61.7" cy="28.8" r="1.4" fill="#fff"/><line x1="55.2" y1="61.4" x2="68.2" y2="61.4" stroke="#eeeeff" stroke-width="1.1"/><circle cx="61.7" cy="61.4" r="1.4" fill="#fff"/><line x1="94.5" y1="0" x2="94.5" y2="90" stroke="#e6e6ff" stroke-width="1"/><line x1="88.0" y1="28.8" x2="101.0" y2="28.8" stroke="#eeeeff" stroke-width="1.1"/><circle cx="94.5" cy="28.8" r="1.4" fill="#fff"/><line x1="88.0" y1="61.4" x2="101.0" y2="61.4" stroke="#eeeeff" stroke-width="1.1"/><circle cx="94.5" cy="61.4" r="1.4" fill="#fff"/><line x1="127.3" y1="0" x2="127.3" y2="90" stroke="#e6e6ff" stroke-width="1"/><line x1="120.8" y1="28.8" x2="133.8" y2="28.8" stroke="#eeeeff" stroke-width="1.1"/><circle cx="127.3" cy="28.8" r="1.4" fill="#fff"/><line x1="120.8" y1="61.4" x2="133.8" y2="61.4" stroke="#eeeeff" stroke-width="1.1"/><circle cx="127.3" cy="61.4" r="1.4" fill="#fff"/></svg>
<svg class="a" style="left:232.5px;top:284.5px;" width="30" height="28" viewBox="0 0 30 28"><path d="M3 4 V22 H23" stroke="#6e6e6e" stroke-width="1.2" fill="none"/></svg>
<div class="t" style="left:236.5px;top:280.7px;font-size:9px;color:#6e6e6e;">y</div>
<div class="t" style="left:256.5px;top:300.7px;font-size:9px;color:#6e6e6e;">x</div>
<div class="a" style="left:211px;top:39px;width:32px;height:13px;background:#7b7b7b"></div>
<div class="t" style="left:215.0px;top:40.7px;font-size:9px;color:#ececec;transform:scaleX(1.034);transform-origin:0 0;">Top</div>
<div class="a" style="left:235px;top:41px;width:1px;height:10px;background:#b0b0b0;"></div>
<svg class="a" style="left:237px;top:44px;" width="5" height="4" viewBox="0 0 5 4"><path d="M0 0 L4 0 L2 3 Z" fill="#f0f0f0"/></svg>
<svg class="a" style="left:211px;top:334px;overflow:hidden" width="425" height="289" viewBox="0 0 425 289"><g stroke="#3f3f3f" stroke-width="1"><line x1="17.70" y1="0" x2="17.70" y2="289" /><line x1="43.70" y1="0" x2="43.70" y2="289" /><line x1="69.70" y1="0" x2="69.70" y2="289" /><line x1="95.70" y1="0" x2="95.70" y2="289" /><line x1="121.70" y1="0" x2="121.70" y2="289" /><line x1="147.70" y1="0" x2="147.70" y2="289" /><line x1="173.70" y1="0" x2="173.70" y2="289" /><line x1="199.70" y1="0" x2="199.70" y2="289" /><line x1="251.70" y1="0" x2="251.70" y2="289" /><line x1="277.70" y1="0" x2="277.70" y2="289" /><line x1="303.70" y1="0" x2="303.70" y2="289" /><line x1="329.70" y1="0" x2="329.70" y2="289" /><line x1="355.70" y1="0" x2="355.70" y2="289" /><line x1="381.70" y1="0" x2="381.70" y2="289" /><line x1="407.70" y1="0" x2="407.70" y2="289" /><line x1="0" y1="23.00" x2="425" y2="23.00" /><line x1="0" y1="49.00" x2="425" y2="49.00" /><line x1="0" y1="75.00" x2="425" y2="75.00" /><line x1="0" y1="101.00" x2="425" y2="101.00" /><line x1="0" y1="153.00" x2="425" y2="153.00" /><line x1="0" y1="179.00" x2="425" y2="179.00" /><line x1="0" y1="205.00" x2="425" y2="205.00" /><line x1="0" y1="231.00" x2="425" y2="231.00" /><line x1="0" y1="257.00" x2="425" y2="257.00" /><line x1="0" y1="283.00" x2="425" y2="283.00" /></g><line x1="225.70" y1="127" x2="225.70" y2="289" stroke="#4a4a4a" stroke-width="1"/><line x1="0" y1="127.00" x2="225.7" y2="127.00" stroke="#4a4a4a" stroke-width="1"/><line x1="225.70" y1="0" x2="225.70" y2="127" stroke="#5f9a5f" stroke-width="1.6"/><line x1="225.7" y1="127.00" x2="425" y2="127.00" stroke="#a05050" stroke-width="1.6"/></svg>
<div class="a" style="left:318px;top:444.5px;width:237px;height:50px;background:#f5ebcd;box-shadow:0 0 0 1px #1f1f1f;border-radius:1px"></div>
<svg class="a" style="left:232.5px;top:576px;" width="30" height="28" viewBox="0 0 30 28"><path d="M3 4 V22 H23" stroke="#6e6e6e" stroke-width="1.2" fill="none"/></svg>
<div class="t" style="left:236.5px;top:572.2px;font-size:9px;color:#6e6e6e;">z</div>
<div class="t" style="left:256.5px;top:592.2px;font-size:9px;color:#6e6e6e;">x</div>
<div class="a" style="left:211px;top:333px;width:37px;height:13px;background:#7b7b7b"></div>
<div class="t" style="left:215.0px;top:334.7px;font-size:9px;color:#ececec;transform:scaleX(1.047);transform-origin:0 0;">Front</div>
<div class="a" style="left:240px;top:335px;width:1px;height:10px;background:#b0b0b0;"></div>
<svg class="a" style="left:242px;top:338px;" width="5" height="4" viewBox="0 0 5 4"><path d="M0 0 L4 0 L2 3 Z" fill="#f0f0f0"/></svg>
<svg class="a" style="left:639px;top:334px;overflow:hidden" width="421" height="289" viewBox="0 0 421 289"><g stroke="#3f3f3f" stroke-width="1"><line x1="6.55" y1="0" x2="6.55" y2="289" /><line x1="28.90" y1="0" x2="28.90" y2="289" /><line x1="51.25" y1="0" x2="51.25" y2="289" /><line x1="73.60" y1="0" x2="73.60" y2="289" /><line x1="95.95" y1="0" x2="95.95" y2="289" /><line x1="118.30" y1="0" x2="118.30" y2="289" /><line x1="140.65" y1="0" x2="140.65" y2="289" /><line x1="163.00" y1="0" x2="163.00" y2="289" /><line x1="185.35" y1="0" x2="185.35" y2="289" /><line x1="230.05" y1="0" x2="230.05" y2="289" /><line x1="252.40" y1="0" x2="252.40" y2="289" /><line x1="274.75" y1="0" x2="274.75" y2="289" /><line x1="297.10" y1="0" x2="297.10" y2="289" /><line x1="319.45" y1="0" x2="319.45" y2="289" /><line x1="341.80" y1="0" x2="341.80" y2="289" /><line x1="364.15" y1="0" x2="364.15" y2="289" /><line x1="386.50" y1="0" x2="386.50" y2="289" /><line x1="408.85" y1="0" x2="408.85" y2="289" /><line x1="0" y1="16.95" x2="421" y2="16.95" /><line x1="0" y1="39.30" x2="421" y2="39.30" /><line x1="0" y1="61.65" x2="421" y2="61.65" /><line x1="0" y1="84.00" x2="421" y2="84.00" /><line x1="0" y1="106.35" x2="421" y2="106.35" /><line x1="0" y1="151.05" x2="421" y2="151.05" /><line x1="0" y1="173.40" x2="421" y2="173.40" /><line x1="0" y1="195.75" x2="421" y2="195.75" /><line x1="0" y1="218.10" x2="421" y2="218.10" /><line x1="0" y1="240.45" x2="421" y2="240.45" /><line x1="0" y1="262.80" x2="421" y2="262.80" /><line x1="0" y1="285.15" x2="421" y2="285.15" /></g><line x1="207.70" y1="128.7" x2="207.70" y2="289" stroke="#4a4a4a" stroke-width="1"/><line x1="0" y1="128.70" x2="207.70000000000005" y2="128.70" stroke="#4a4a4a" stroke-width="1"/><line x1="207.70" y1="0" x2="207.70" y2="128.7" stroke="#5f9a5f" stroke-width="1.6"/><line x1="207.70000000000005" y1="128.70" x2="421" y2="128.70" stroke="#a05050" stroke-width="1.6"/></svg>
<div class="a" style="left:780px;top:448.5px;width:133.5px;height:44px;background:#f5ebcd;box-shadow:0 0 0 1px #1f1f1f;border-radius:1px"></div>
<svg class="a" style="left:660px;top:576px;" width="30" height="28" viewBox="0 0 30 28"><path d="M3 4 V22 H23" stroke="#6e6e6e" stroke-width="1.2" fill="none"/></svg>
<div class="t" style="left:664.0px;top:572.2px;font-size:9px;color:#6e6e6e;">z</div>
<div class="t" style="left:684.0px;top:592.2px;font-size:9px;color:#6e6e6e;">y</div>
<div class="a" style="left:639px;top:333px;width:36px;height:13px;background:#7b7b7b"></div>
<div class="t" style="left:643.0px;top:334.7px;font-size:9px;color:#ececec;transform:scaleX(0.952);transform-origin:0 0;">Right</div>
<div class="a" style="left:667px;top:335px;width:1px;height:10px;background:#b0b0b0;"></div>
<svg class="a" style="left:669px;top:338px;" width="5" height="4" viewBox="0 0 5 4"><path d="M0 0 L4 0 L2 3 Z" fill="#f0f0f0"/></svg>
<div class="a" style="left:210px;top:624px;width:852px;height:14px;background:#3a3a3a;"></div>
<div class="a" style="left:211px;top:624px;width:51px;height:13px;background:#2a2a2a;border:1px solid #555;border-top:none;border-radius:0 0 3px 3px"></div>
<div class="t" style="left:217.0px;top:625.7px;font-size:9px;color:#e8e8e8;transform:scaleX(0.851);transform-origin:0 0;">Perspective</div>
<div class="t" style="left:266.0px;top:625.7px;font-size:9px;color:#6f6f6f;transform:scaleX(1.034);transform-origin:0 0;">Top</div>
<div class="t" style="left:290.0px;top:625.7px;font-size:9px;color:#6f6f6f;transform:scaleX(0.905);transform-origin:0 0;">Front</div>
<div class="t" style="left:318.0px;top:625.7px;font-size:9px;color:#6f6f6f;transform:scaleX(0.904);transform-origin:0 0;">Right</div>
<svg class="a" style="left:345px;top:626px;" width="10" height="10" viewBox="0 0 10 10"><path d="M5 1 V9 M1 5 H9" stroke="#fff" stroke-width="1.8"/></svg>
<svg class="a" style="left:639px;top:40px;overflow:hidden" width="421" height="289" viewBox="0 0 421 289"><g stroke="#3d3d3d" stroke-width="0.9"><line x1="-2694.3" y1="142.8" x2="191.5" y2="587.1"/><line x1="-2728.3" y1="134.6" x2="194.3" y2="586.9"/><line x1="-2763.4" y1="126.1" x2="197.2" y2="586.6"/><line x1="-2799.7" y1="117.4" x2="200.1" y2="586.4"/><line x1="-2837.2" y1="108.3" x2="203.0" y2="586.1"/><line x1="-2876.0" y1="99.0" x2="205.9" y2="585.9"/><line x1="-2916.1" y1="89.3" x2="208.9" y2="585.7"/><line x1="-2957.7" y1="79.3" x2="211.9" y2="585.4"/><line x1="-3000.8" y1="68.9" x2="214.9" y2="585.2"/><line x1="-3091.9" y1="46.9" x2="220.9" y2="584.6"/><line x1="-3140.0" y1="35.3" x2="224.0" y2="584.4"/><line x1="-3190.1" y1="23.3" x2="227.1" y2="584.1"/><line x1="-3242.1" y1="10.7" x2="230.2" y2="583.9"/><line x1="-3296.2" y1="-2.3" x2="233.4" y2="583.6"/><line x1="-3352.6" y1="-15.9" x2="236.5" y2="583.3"/><line x1="-3411.4" y1="-30.1" x2="239.7" y2="583.1"/><line x1="-3472.8" y1="-44.9" x2="242.9" y2="582.8"/><line x1="-3536.8" y1="-60.3" x2="246.2" y2="582.5"/><line x1="-3673.9" y1="-93.4" x2="252.7" y2="582.0"/><line x1="-3747.3" y1="-111.1" x2="256.0" y2="581.7"/><line x1="-3824.2" y1="-129.6" x2="259.4" y2="581.4"/><line x1="-3905.0" y1="-149.1" x2="262.8" y2="581.1"/><line x1="-3990.0" y1="-169.6" x2="266.2" y2="580.9"/><line x1="-4079.4" y1="-191.1" x2="269.6" y2="580.6"/><line x1="-4173.6" y1="-213.8" x2="273.0" y2="580.3"/><line x1="-4273.0" y1="-237.8" x2="276.5" y2="580.0"/><line x1="-4378.1" y1="-263.1" x2="280.0" y2="579.7"/><line x1="-4607.3" y1="-318.4" x2="287.1" y2="579.1"/><line x1="-4732.6" y1="-348.6" x2="290.7" y2="578.8"/><line x1="-4865.9" y1="-380.8" x2="294.4" y2="578.5"/><line x1="-5008.1" y1="-415.0" x2="298.0" y2="578.2"/><line x1="-5160.1" y1="-451.7" x2="301.7" y2="577.9"/><line x1="-5322.9" y1="-490.9" x2="305.4" y2="577.6"/><line x1="-5497.6" y1="-533.1" x2="309.2" y2="577.2"/><line x1="-5685.8" y1="-578.4" x2="312.9" y2="576.9"/><line x1="-5888.9" y1="-627.4" x2="316.8" y2="576.6"/><line x1="-6347.9" y1="-738.0" x2="324.5" y2="576.0"/><line x1="-6608.5" y1="-800.9" x2="328.4" y2="575.6"/><line x1="-6893.8" y1="-869.6" x2="332.4" y2="575.3"/><line x1="-7207.4" y1="-945.2" x2="336.3" y2="575.0"/><line x1="-7553.8" y1="-1028.8" x2="340.4" y2="574.6"/><line x1="-7938.5" y1="-1121.5" x2="344.4" y2="574.3"/><line x1="-8368.1" y1="-1225.1" x2="348.5" y2="573.9"/><line x1="-8850.9" y1="-1341.5" x2="352.6" y2="573.6"/><line x1="-9397.6" y1="-1473.3" x2="356.8" y2="573.3"/><line x1="-10740.9" y1="-1797.1" x2="365.2" y2="572.5"/><line x1="-11578.8" y1="-1999.1" x2="369.5" y2="572.2"/><line x1="-12567.2" y1="-2237.4" x2="373.8" y2="571.8"/><line x1="-13750.9" y1="-2522.7" x2="378.1" y2="571.5"/><line x1="-15194.1" y1="-2870.7" x2="382.5" y2="571.1"/><line x1="-16992.5" y1="-3304.2" x2="387.0" y2="570.7"/><line x1="-19295.7" y1="-3859.5" x2="391.4" y2="570.3"/><line x1="-22350.9" y1="-4596.0" x2="396.0" y2="570.0"/><line x1="-26598.4" y1="-5620.0" x2="400.5" y2="569.6"/><line x1="-34353.1" y1="-7555.2" x2="409.8" y2="568.8"/><line x1="-33932.9" y1="-7537.5" x2="414.4" y2="568.4"/><line x1="-33512.7" y1="-7519.9" x2="419.2" y2="568.0"/><line x1="-33092.5" y1="-7502.2" x2="423.9" y2="567.6"/><line x1="-32672.3" y1="-7484.6" x2="428.8" y2="567.2"/><line x1="-32252.2" y1="-7466.9" x2="433.6" y2="566.8"/><line x1="-31832.0" y1="-7449.3" x2="438.6" y2="566.4"/><line x1="-31411.8" y1="-7431.6" x2="443.5" y2="566.0"/><line x1="-30991.6" y1="-7414.0" x2="448.5" y2="565.6"/><line x1="-30151.2" y1="-7378.7" x2="458.7" y2="564.7"/><line x1="-29731.0" y1="-7361.0" x2="463.9" y2="564.3"/><line x1="-29310.8" y1="-7343.4" x2="469.1" y2="563.8"/><line x1="-28890.6" y1="-7325.8" x2="474.3" y2="563.4"/><line x1="-28470.4" y1="-7308.1" x2="479.7" y2="562.9"/><line x1="-28050.2" y1="-7290.5" x2="485.0" y2="562.5"/><line x1="-27630.0" y1="-7272.8" x2="490.5" y2="562.0"/><line x1="-27209.8" y1="-7255.2" x2="495.9" y2="561.6"/><line x1="-26789.6" y1="-7237.5" x2="501.5" y2="561.1"/><line x1="-25949.2" y1="-7202.2" x2="512.7" y2="560.2"/><line x1="-25529.0" y1="-7184.6" x2="518.4" y2="559.7"/><line x1="-25108.8" y1="-7166.9" x2="524.2" y2="559.2"/><line x1="-24688.6" y1="-7149.3" x2="530.0" y2="558.7"/><line x1="-24268.4" y1="-7131.6" x2="535.9" y2="558.2"/><line x1="-23848.2" y1="-7114.0" x2="541.9" y2="557.7"/><line x1="-23428.0" y1="-7096.3" x2="547.9" y2="557.2"/><line x1="-23007.8" y1="-7078.7" x2="554.0" y2="556.7"/><line x1="-22587.6" y1="-7061.0" x2="560.2" y2="556.2"/><line x1="-21747.2" y1="-7025.8" x2="572.7" y2="555.1"/><line x1="-21327.0" y1="-7008.1" x2="579.0" y2="554.6"/><line x1="-20906.8" y1="-6990.5" x2="585.5" y2="554.1"/><line x1="-20486.6" y1="-6972.8" x2="592.0" y2="553.5"/><line x1="-20066.4" y1="-6955.2" x2="598.5" y2="553.0"/><line x1="-19646.2" y1="-6937.5" x2="605.2" y2="552.4"/><line x1="-19226.0" y1="-6919.9" x2="611.9" y2="551.9"/><line x1="-18805.8" y1="-6902.2" x2="618.7" y2="551.3"/><line x1="-18385.6" y1="-6884.6" x2="625.6" y2="550.7"/><line x1="-17545.2" y1="-6849.3" x2="639.6" y2="549.5"/><line x1="-17125.1" y1="-6831.6" x2="646.7" y2="548.9"/><line x1="-16704.9" y1="-6814.0" x2="653.9" y2="548.3"/><line x1="-16284.7" y1="-6796.3" x2="661.2" y2="547.7"/><line x1="-15864.5" y1="-6778.7" x2="668.5" y2="547.1"/><line x1="-15444.3" y1="-6761.1" x2="676.0" y2="546.5"/><line x1="-15024.1" y1="-6743.4" x2="683.5" y2="545.8"/><line x1="-14603.9" y1="-6725.8" x2="691.2" y2="545.2"/><line x1="-14183.7" y1="-6708.1" x2="698.9" y2="544.6"/><line x1="-13343.3" y1="-6672.8" x2="714.7" y2="543.2"/><line x1="-12923.1" y1="-6655.2" x2="722.7" y2="542.6"/><line x1="-12502.9" y1="-6637.5" x2="730.8" y2="541.9"/><line x1="-12082.7" y1="-6619.9" x2="739.0" y2="541.2"/><line x1="-11662.5" y1="-6602.2" x2="747.4" y2="540.5"/><line x1="-11242.3" y1="-6584.6" x2="755.8" y2="539.8"/><line x1="-10822.1" y1="-6566.9" x2="764.3" y2="539.1"/><line x1="-10401.9" y1="-6549.3" x2="773.0" y2="538.3"/><line x1="-9981.7" y1="-6531.6" x2="781.8" y2="537.6"/><line x1="-9141.3" y1="-6496.4" x2="799.6" y2="536.1"/><line x1="-8721.1" y1="-6478.7" x2="808.7" y2="535.3"/><line x1="-8300.9" y1="-6461.1" x2="818.0" y2="534.6"/><line x1="-7880.7" y1="-6443.4" x2="827.3" y2="533.8"/><line x1="-7460.5" y1="-6425.8" x2="836.8" y2="533.0"/><line x1="-7040.3" y1="-6408.1" x2="846.4" y2="532.2"/><line x1="-6620.1" y1="-6390.5" x2="856.2" y2="531.4"/><line x1="-6199.9" y1="-6372.8" x2="866.0" y2="530.5"/><line x1="-5779.7" y1="-6355.2" x2="876.1" y2="529.7"/><line x1="-4939.3" y1="-6319.9" x2="896.5" y2="528.0"/><line x1="-4519.1" y1="-6302.2" x2="906.9" y2="527.1"/><line x1="-4098.9" y1="-6284.6" x2="917.5" y2="526.2"/><line x1="-3678.7" y1="-6266.9" x2="928.3" y2="525.3"/><line x1="-3258.5" y1="-6249.3" x2="939.2" y2="524.4"/><line x1="-2838.3" y1="-6231.7" x2="950.2" y2="523.5"/><line x1="-2418.1" y1="-6214.0" x2="961.4" y2="522.5"/><line x1="-1997.9" y1="-6196.4" x2="972.8" y2="521.6"/><line x1="-1577.8" y1="-6178.7" x2="984.4" y2="520.6"/><line x1="-737.4" y1="-6143.4" x2="1008.0" y2="518.6"/><line x1="-317.2" y1="-6125.8" x2="1020.1" y2="517.6"/><line x1="103.0" y1="-6108.1" x2="1032.3" y2="516.6"/><line x1="523.2" y1="-6090.5" x2="1044.8" y2="515.5"/><line x1="943.4" y1="-6072.8" x2="1057.4" y2="514.5"/><line x1="1363.6" y1="-6055.2" x2="1070.3" y2="513.4"/><line x1="1783.8" y1="-6037.5" x2="1083.3" y2="512.3"/><line x1="2204.0" y1="-6019.9" x2="1096.6" y2="511.2"/><line x1="2624.2" y1="-6002.2" x2="1110.0" y2="510.1"/><line x1="3464.6" y1="-5967.0" x2="1137.6" y2="507.7"/><line x1="3884.8" y1="-5949.3" x2="1151.8" y2="506.6"/><line x1="4305.0" y1="-5931.7" x2="1166.2" y2="505.4"/><line x1="4725.2" y1="-5914.0" x2="1180.8" y2="504.1"/><line x1="5145.4" y1="-5896.4" x2="1195.6" y2="502.9"/><line x1="5565.6" y1="-5878.7" x2="1210.7" y2="501.6"/><line x1="5985.8" y1="-5861.1" x2="1226.1" y2="500.3"/><line x1="6406.0" y1="-5843.4" x2="1241.7" y2="499.0"/><line x1="6826.2" y1="-5825.8" x2="1257.7" y2="497.7"/><line x1="7666.6" y1="-5790.5" x2="1290.3" y2="494.9"/><line x1="8086.8" y1="-5772.8" x2="1307.1" y2="493.5"/><line x1="8507.0" y1="-5755.2" x2="1324.2" y2="492.1"/><line x1="8927.2" y1="-5737.5" x2="1341.6" y2="490.6"/><line x1="9347.4" y1="-5719.9" x2="1359.3" y2="489.2"/><line x1="9767.6" y1="-5702.2" x2="1377.3" y2="487.6"/><line x1="10187.8" y1="-5684.6" x2="1395.7" y2="486.1"/><line x1="10608.0" y1="-5667.0" x2="1414.4" y2="484.5"/><line x1="11028.2" y1="-5649.3" x2="1433.5" y2="482.9"/><line x1="11868.6" y1="-5614.0" x2="1472.8" y2="479.6"/><line x1="12288.8" y1="-5596.4" x2="1493.0" y2="477.9"/><line x1="12709.0" y1="-5578.7" x2="1513.6" y2="476.2"/><line x1="13129.2" y1="-5561.1" x2="1534.6" y2="474.4"/><line x1="13549.3" y1="-5543.4" x2="1556.1" y2="472.6"/><line x1="13969.5" y1="-5525.8" x2="1578.0" y2="470.8"/><line x1="14389.7" y1="-5508.1" x2="1600.4" y2="468.9"/><line x1="14809.9" y1="-5490.5" x2="1623.2" y2="467.0"/><line x1="15230.1" y1="-5472.8" x2="1646.5" y2="465.1"/><line x1="16070.5" y1="-5437.5" x2="1694.6" y2="461.0"/><line x1="16490.7" y1="-5419.9" x2="1719.4" y2="458.9"/><line x1="16910.9" y1="-5402.3" x2="1744.8" y2="456.8"/><line x1="17331.1" y1="-5384.6" x2="1770.8" y2="454.6"/><line x1="17751.3" y1="-5367.0" x2="1797.4" y2="452.4"/><line x1="18171.5" y1="-5349.3" x2="1824.5" y2="450.1"/><line x1="18591.7" y1="-5331.7" x2="1852.3" y2="447.8"/><line x1="19011.9" y1="-5314.0" x2="1880.7" y2="445.4"/><line x1="19432.1" y1="-5296.4" x2="1909.8" y2="443.0"/><line x1="20272.5" y1="-5261.1" x2="1970.1" y2="437.9"/><line x1="20692.7" y1="-5243.4" x2="2001.4" y2="435.3"/><line x1="21112.9" y1="-5225.8" x2="2033.4" y2="432.6"/><line x1="21533.1" y1="-5208.1" x2="2066.3" y2="429.8"/><line x1="21953.3" y1="-5190.5" x2="2100.0" y2="427.0"/><line x1="22373.5" y1="-5172.8" x2="2134.5" y2="424.1"/><line x1="22793.7" y1="-5155.2" x2="2170.0" y2="421.2"/><line x1="23213.9" y1="-5137.6" x2="2206.4" y2="418.1"/><line x1="23634.1" y1="-5119.9" x2="2243.7" y2="415.0"/><line x1="24474.5" y1="-5084.6" x2="2321.5" y2="408.4"/><line x1="24894.7" y1="-5067.0" x2="2362.1" y2="405.0"/><line x1="25314.9" y1="-5049.3" x2="2403.8" y2="401.5"/><line x1="25735.1" y1="-5031.7" x2="2446.6" y2="397.9"/><line x1="26155.3" y1="-5014.0" x2="2490.8" y2="394.2"/><line x1="26575.5" y1="-4996.4" x2="2536.2" y2="390.4"/><line x1="26995.7" y1="-4978.7" x2="2583.0" y2="386.5"/><line x1="27415.9" y1="-4961.1" x2="2631.2" y2="382.5"/><line x1="27836.1" y1="-4943.4" x2="2681.0" y2="378.3"/><line x1="28676.4" y1="-4908.1" x2="2785.2" y2="369.5"/><line x1="29096.6" y1="-4890.5" x2="2839.8" y2="365.0"/><line x1="29516.8" y1="-4872.9" x2="2896.2" y2="360.2"/><line x1="29937.0" y1="-4855.2" x2="2954.6" y2="355.3"/><line x1="30357.2" y1="-4837.6" x2="3014.9" y2="350.3"/><line x1="30777.4" y1="-4819.9" x2="3077.3" y2="345.0"/><line x1="31197.6" y1="-4802.3" x2="3141.9" y2="339.6"/><line x1="31617.8" y1="-4784.6" x2="3208.9" y2="334.0"/><line x1="32038.0" y1="-4767.0" x2="3278.3" y2="328.2"/><line x1="32878.4" y1="-4731.7" x2="3425.0" y2="315.9"/><line x1="33298.6" y1="-4714.0" x2="3502.6" y2="309.4"/><line x1="33718.8" y1="-4696.4" x2="3583.3" y2="302.6"/><line x1="34139.0" y1="-4678.7" x2="3667.2" y2="295.6"/><line x1="34559.2" y1="-4661.1" x2="3754.6" y2="288.2"/><line x1="34979.4" y1="-4643.4" x2="3845.6" y2="280.6"/><line x1="35399.6" y1="-4625.8" x2="3940.6" y2="272.6"/><line x1="35819.8" y1="-4608.2" x2="4039.7" y2="264.3"/><line x1="36240.0" y1="-4590.5" x2="4143.3" y2="255.6"/><line x1="37080.4" y1="-4555.2" x2="4365.0" y2="237.0"/><line x1="37500.6" y1="-4537.6" x2="4483.8" y2="227.1"/><line x1="37920.8" y1="-4519.9" x2="4608.5" y2="216.6"/><line x1="38341.0" y1="-4502.3" x2="4739.5" y2="205.6"/><line x1="38761.2" y1="-4484.6" x2="4877.3" y2="194.0"/><line x1="39181.4" y1="-4467.0" x2="5022.4" y2="181.9"/><line x1="39601.6" y1="-4449.3" x2="5175.4" y2="169.0"/><line x1="40021.8" y1="-4431.7" x2="5337.0" y2="155.5"/><line x1="40442.0" y1="-4414.0" x2="5507.9" y2="141.1"/><line x1="-2611.3" y1="158.4" x2="-34316.2" y2="-7553.6"/><line x1="-2562.7" y1="165.8" x2="-33949.4" y2="-7538.2"/><line x1="-2515.3" y1="173.1" x2="-33582.6" y2="-7522.8"/><line x1="-2469.1" y1="180.2" x2="-33215.8" y2="-7507.4"/><line x1="-2424.1" y1="187.1" x2="-32849.0" y2="-7492.0"/><line x1="-2380.3" y1="193.8" x2="-32482.2" y2="-7476.6"/><line x1="-2337.5" y1="200.3" x2="-32115.4" y2="-7461.2"/><line x1="-2295.8" y1="206.7" x2="-31748.6" y2="-7445.8"/><line x1="-2255.1" y1="213.0" x2="-31381.8" y2="-7430.4"/><line x1="-2176.5" y1="225.0" x2="-30648.2" y2="-7399.6"/><line x1="-2138.7" y1="230.8" x2="-30281.4" y2="-7384.2"/><line x1="-2101.6" y1="236.5" x2="-29914.6" y2="-7368.8"/><line x1="-2065.5" y1="242.0" x2="-29547.8" y2="-7353.4"/><line x1="-2030.1" y1="247.4" x2="-29181.0" y2="-7337.9"/><line x1="-1995.6" y1="252.7" x2="-28814.2" y2="-7322.5"/><line x1="-1961.8" y1="257.9" x2="-28447.4" y2="-7307.1"/><line x1="-1928.7" y1="263.0" x2="-28080.6" y2="-7291.7"/><line x1="-1896.4" y1="267.9" x2="-27713.8" y2="-7276.3"/><line x1="-1833.8" y1="277.5" x2="-26980.2" y2="-7245.5"/><line x1="-1803.5" y1="282.1" x2="-26613.4" y2="-7230.1"/><line x1="-1773.8" y1="286.7" x2="-26246.6" y2="-7214.7"/><line x1="-1744.7" y1="291.2" x2="-25879.8" y2="-7199.3"/><line x1="-1716.2" y1="295.5" x2="-25513.0" y2="-7183.9"/><line x1="-1688.3" y1="299.8" x2="-25146.2" y2="-7168.5"/><line x1="-1660.9" y1="304.0" x2="-24779.4" y2="-7153.1"/><line x1="-1634.1" y1="308.1" x2="-24412.6" y2="-7137.7"/><line x1="-1607.8" y1="312.1" x2="-24045.8" y2="-7122.3"/><line x1="-1556.7" y1="320.0" x2="-23312.2" y2="-7091.5"/><line x1="-1531.9" y1="323.8" x2="-22945.4" y2="-7076.1"/><line x1="-1507.5" y1="327.5" x2="-22578.6" y2="-7060.7"/><line x1="-1483.6" y1="331.2" x2="-22211.8" y2="-7045.3"/><line x1="-1460.1" y1="334.7" x2="-21845.0" y2="-7029.9"/><line x1="-1437.1" y1="338.3" x2="-21478.2" y2="-7014.5"/><line x1="-1414.5" y1="341.7" x2="-21111.4" y2="-6999.1"/><line x1="-1392.3" y1="345.1" x2="-20744.6" y2="-6983.6"/><line x1="-1370.5" y1="348.5" x2="-20377.8" y2="-6968.2"/><line x1="-1328.0" y1="355.0" x2="-19644.2" y2="-6937.4"/><line x1="-1307.3" y1="358.2" x2="-19277.4" y2="-6922.0"/><line x1="-1287.0" y1="361.3" x2="-18910.6" y2="-6906.6"/><line x1="-1267.0" y1="364.3" x2="-18543.8" y2="-6891.2"/><line x1="-1247.3" y1="367.4" x2="-18177.0" y2="-6875.8"/><line x1="-1228.0" y1="370.3" x2="-17810.2" y2="-6860.4"/><line x1="-1209.0" y1="373.2" x2="-17443.4" y2="-6845.0"/><line x1="-1190.3" y1="376.1" x2="-17076.6" y2="-6829.6"/><line x1="-1171.9" y1="378.9" x2="-16709.8" y2="-6814.2"/><line x1="-1136.0" y1="384.4" x2="-15976.2" y2="-6783.4"/><line x1="-1118.5" y1="387.1" x2="-15609.4" y2="-6768.0"/><line x1="-1101.3" y1="389.7" x2="-15242.6" y2="-6752.6"/><line x1="-1084.3" y1="392.3" x2="-14875.8" y2="-6737.2"/><line x1="-1067.6" y1="394.9" x2="-14509.0" y2="-6721.8"/><line x1="-1051.2" y1="397.4" x2="-14142.2" y2="-6706.4"/><line x1="-1035.0" y1="399.9" x2="-13775.4" y2="-6691.0"/><line x1="-1019.0" y1="402.3" x2="-13408.6" y2="-6675.6"/><line x1="-1003.3" y1="404.7" x2="-13041.8" y2="-6660.2"/><line x1="-972.6" y1="409.4" x2="-12308.2" y2="-6629.4"/><line x1="-957.6" y1="411.7" x2="-11941.4" y2="-6613.9"/><line x1="-942.8" y1="414.0" x2="-11574.6" y2="-6598.5"/><line x1="-928.3" y1="416.2" x2="-11207.8" y2="-6583.1"/><line x1="-913.9" y1="418.4" x2="-10841.0" y2="-6567.7"/><line x1="-899.7" y1="420.6" x2="-10474.2" y2="-6552.3"/><line x1="-885.8" y1="422.7" x2="-10107.4" y2="-6536.9"/><line x1="-872.0" y1="424.9" x2="-9740.6" y2="-6521.5"/><line x1="-858.4" y1="426.9" x2="-9373.8" y2="-6506.1"/><line x1="-831.9" y1="431.0" x2="-8640.2" y2="-6475.3"/><line x1="-818.8" y1="433.0" x2="-8273.4" y2="-6459.9"/><line x1="-806.0" y1="435.0" x2="-7906.6" y2="-6444.5"/><line x1="-793.4" y1="436.9" x2="-7539.8" y2="-6429.1"/><line x1="-780.9" y1="438.8" x2="-7173.0" y2="-6413.7"/><line x1="-768.5" y1="440.7" x2="-6806.2" y2="-6398.3"/><line x1="-756.4" y1="442.6" x2="-6439.4" y2="-6382.9"/><line x1="-744.4" y1="444.4" x2="-6072.6" y2="-6367.5"/><line x1="-732.5" y1="446.2" x2="-5705.8" y2="-6352.1"/><line x1="-709.3" y1="449.8" x2="-4972.2" y2="-6321.3"/><line x1="-697.9" y1="451.5" x2="-4605.4" y2="-6305.9"/><line x1="-686.7" y1="453.2" x2="-4238.6" y2="-6290.5"/><line x1="-675.6" y1="454.9" x2="-3871.8" y2="-6275.1"/><line x1="-664.6" y1="456.6" x2="-3505.0" y2="-6259.6"/><line x1="-653.8" y1="458.3" x2="-3138.2" y2="-6244.2"/><line x1="-643.1" y1="459.9" x2="-2771.4" y2="-6228.8"/><line x1="-632.6" y1="461.5" x2="-2404.6" y2="-6213.4"/><line x1="-622.1" y1="463.1" x2="-2037.8" y2="-6198.0"/><line x1="-601.7" y1="466.3" x2="-1304.2" y2="-6167.2"/><line x1="-591.6" y1="467.8" x2="-937.4" y2="-6151.8"/><line x1="-581.7" y1="469.3" x2="-570.6" y2="-6136.4"/><line x1="-571.9" y1="470.8" x2="-203.8" y2="-6121.0"/><line x1="-562.2" y1="472.3" x2="163.0" y2="-6105.6"/><line x1="-552.6" y1="473.8" x2="529.8" y2="-6090.2"/><line x1="-543.1" y1="475.2" x2="896.6" y2="-6074.8"/><line x1="-533.8" y1="476.7" x2="1263.4" y2="-6059.4"/><line x1="-524.5" y1="478.1" x2="1630.2" y2="-6044.0"/><line x1="-506.4" y1="480.9" x2="2363.8" y2="-6013.2"/><line x1="-497.4" y1="482.2" x2="2730.6" y2="-5997.8"/><line x1="-488.6" y1="483.6" x2="3097.4" y2="-5982.4"/><line x1="-479.9" y1="484.9" x2="3464.2" y2="-5967.0"/><line x1="-471.2" y1="486.3" x2="3831.0" y2="-5951.6"/><line x1="-462.7" y1="487.6" x2="4197.8" y2="-5936.2"/><line x1="-454.3" y1="488.9" x2="4564.6" y2="-5920.8"/><line x1="-445.9" y1="490.1" x2="4931.4" y2="-5905.4"/><line x1="-437.6" y1="491.4" x2="5298.2" y2="-5889.9"/><line x1="-421.4" y1="493.9" x2="6031.8" y2="-5859.1"/><line x1="-413.4" y1="495.1" x2="6398.6" y2="-5843.7"/><line x1="-405.5" y1="496.3" x2="6765.4" y2="-5828.3"/><line x1="-397.7" y1="497.5" x2="7132.2" y2="-5812.9"/><line x1="-389.9" y1="498.7" x2="7499.0" y2="-5797.5"/><line x1="-382.3" y1="499.9" x2="7865.8" y2="-5782.1"/><line x1="-374.7" y1="501.0" x2="8232.6" y2="-5766.7"/><line x1="-367.2" y1="502.2" x2="8599.4" y2="-5751.3"/><line x1="-359.8" y1="503.3" x2="8966.2" y2="-5735.9"/><line x1="-345.2" y1="505.6" x2="9699.8" y2="-5705.1"/><line x1="-338.0" y1="506.7" x2="10066.6" y2="-5689.7"/><line x1="-330.8" y1="507.8" x2="10433.4" y2="-5674.3"/><line x1="-323.8" y1="508.8" x2="10800.2" y2="-5658.9"/><line x1="-316.8" y1="509.9" x2="11167.0" y2="-5643.5"/><line x1="-309.9" y1="511.0" x2="11533.8" y2="-5628.1"/><line x1="-303.1" y1="512.0" x2="11900.6" y2="-5612.7"/><line x1="-296.3" y1="513.1" x2="12267.4" y2="-5597.3"/><line x1="-289.6" y1="514.1" x2="12634.2" y2="-5581.9"/><line x1="-276.4" y1="516.1" x2="13367.8" y2="-5551.1"/><line x1="-269.9" y1="517.1" x2="13734.6" y2="-5535.6"/><line x1="-263.4" y1="518.1" x2="14101.4" y2="-5520.2"/><line x1="-257.1" y1="519.1" x2="14468.2" y2="-5504.8"/><line x1="-250.7" y1="520.0" x2="14835.0" y2="-5489.4"/><line x1="-244.5" y1="521.0" x2="15201.8" y2="-5474.0"/><line x1="-238.3" y1="521.9" x2="15568.6" y2="-5458.6"/><line x1="-232.1" y1="522.9" x2="15935.4" y2="-5443.2"/><line x1="-226.0" y1="523.8" x2="16302.2" y2="-5427.8"/><line x1="-214.0" y1="525.7" x2="17035.8" y2="-5397.0"/><line x1="-208.1" y1="526.6" x2="17402.6" y2="-5381.6"/><line x1="-202.2" y1="527.5" x2="17769.4" y2="-5366.2"/><line x1="-196.4" y1="528.4" x2="18136.2" y2="-5350.8"/><line x1="-190.7" y1="529.2" x2="18503.0" y2="-5335.4"/><line x1="-185.0" y1="530.1" x2="18869.8" y2="-5320.0"/><line x1="-179.3" y1="531.0" x2="19236.6" y2="-5304.6"/><line x1="-173.7" y1="531.8" x2="19603.4" y2="-5289.2"/><line x1="-168.2" y1="532.7" x2="19970.2" y2="-5273.8"/><line x1="-157.2" y1="534.4" x2="20703.8" y2="-5243.0"/><line x1="-151.8" y1="535.2" x2="21070.6" y2="-5227.6"/><line x1="-146.5" y1="536.0" x2="21437.4" y2="-5212.2"/><line x1="-141.2" y1="536.8" x2="21804.2" y2="-5196.8"/><line x1="-135.9" y1="537.6" x2="22171.0" y2="-5181.4"/><line x1="-130.7" y1="538.4" x2="22537.8" y2="-5165.9"/><line x1="-125.5" y1="539.2" x2="22904.6" y2="-5150.5"/><line x1="-120.4" y1="540.0" x2="23271.4" y2="-5135.1"/><line x1="-115.3" y1="540.8" x2="23638.2" y2="-5119.7"/><line x1="-105.3" y1="542.3" x2="24371.8" y2="-5088.9"/><line x1="-100.3" y1="543.1" x2="24738.6" y2="-5073.5"/><line x1="-95.4" y1="543.8" x2="25105.4" y2="-5058.1"/><line x1="-90.5" y1="544.6" x2="25472.2" y2="-5042.7"/><line x1="-85.7" y1="545.3" x2="25839.0" y2="-5027.3"/><line x1="-80.9" y1="546.1" x2="26205.8" y2="-5011.9"/><line x1="-76.2" y1="546.8" x2="26572.6" y2="-4996.5"/><line x1="-71.5" y1="547.5" x2="26939.4" y2="-4981.1"/><line x1="-66.8" y1="548.2" x2="27306.2" y2="-4965.7"/><line x1="-57.6" y1="549.6" x2="28039.8" y2="-4934.9"/><line x1="-53.0" y1="550.3" x2="28406.6" y2="-4919.5"/><line x1="-48.5" y1="551.0" x2="28773.4" y2="-4904.1"/><line x1="-44.0" y1="551.7" x2="29140.2" y2="-4888.7"/><line x1="-39.6" y1="552.4" x2="29507.0" y2="-4873.3"/><line x1="-35.1" y1="553.1" x2="29873.8" y2="-4857.9"/><line x1="-30.8" y1="553.7" x2="30240.6" y2="-4842.5"/><line x1="-26.4" y1="554.4" x2="30607.4" y2="-4827.1"/><line x1="-22.1" y1="555.1" x2="30974.2" y2="-4811.6"/><line x1="-13.6" y1="556.4" x2="31707.8" y2="-4780.8"/><line x1="-9.4" y1="557.0" x2="32074.6" y2="-4765.4"/><line x1="-5.2" y1="557.6" x2="32441.4" y2="-4750.0"/><line x1="-1.1" y1="558.3" x2="32808.2" y2="-4734.6"/><line x1="3.0" y1="558.9" x2="33175.0" y2="-4719.2"/><line x1="7.1" y1="559.5" x2="33541.8" y2="-4703.8"/><line x1="11.2" y1="560.2" x2="33908.6" y2="-4688.4"/><line x1="15.2" y1="560.8" x2="34275.4" y2="-4673.0"/><line x1="19.2" y1="561.4" x2="34642.2" y2="-4657.6"/><line x1="27.0" y1="562.6" x2="35375.8" y2="-4626.8"/><line x1="30.9" y1="563.2" x2="35742.6" y2="-4611.4"/><line x1="34.8" y1="563.8" x2="36109.4" y2="-4596.0"/><line x1="38.6" y1="564.4" x2="36476.2" y2="-4580.6"/><line x1="42.4" y1="565.0" x2="36843.0" y2="-4565.2"/><line x1="46.2" y1="565.5" x2="37209.8" y2="-4549.8"/><line x1="50.0" y1="566.1" x2="37576.6" y2="-4534.4"/><line x1="53.7" y1="566.7" x2="37943.4" y2="-4519.0"/><line x1="57.4" y1="567.2" x2="38310.2" y2="-4503.6"/><line x1="64.7" y1="568.4" x2="39043.8" y2="-4472.8"/><line x1="68.3" y1="568.9" x2="39410.6" y2="-4457.4"/><line x1="71.9" y1="569.5" x2="39777.4" y2="-4441.9"/><line x1="75.5" y1="570.0" x2="40144.2" y2="-4426.5"/><line x1="79.0" y1="570.6" x2="40511.0" y2="-4411.1"/><line x1="82.5" y1="571.1" x2="40487.6" y2="-4348.2"/><line x1="86.0" y1="571.6" x2="33347.5" y2="-3430.2"/><line x1="89.5" y1="572.2" x2="28397.0" y2="-2793.7"/><line x1="92.9" y1="572.7" x2="24762.8" y2="-2326.4"/><line x1="99.7" y1="573.7" x2="19784.4" y2="-1686.3"/><line x1="103.1" y1="574.2" x2="18004.9" y2="-1457.5"/><line x1="106.4" y1="574.8" x2="16534.3" y2="-1268.5"/><line x1="109.8" y1="575.3" x2="15298.6" y2="-1109.6"/><line x1="113.1" y1="575.8" x2="14245.7" y2="-974.2"/><line x1="116.3" y1="576.3" x2="13337.7" y2="-857.5"/><line x1="119.6" y1="576.8" x2="12546.8" y2="-755.8"/><line x1="122.8" y1="577.3" x2="11851.6" y2="-666.4"/><line x1="126.0" y1="577.8" x2="11235.8" y2="-587.2"/><line x1="132.4" y1="578.7" x2="10193.4" y2="-453.2"/><line x1="135.5" y1="579.2" x2="9748.4" y2="-396.0"/><line x1="138.6" y1="579.7" x2="9344.7" y2="-344.1"/><line x1="141.7" y1="580.2" x2="8976.9" y2="-296.8"/><line x1="144.8" y1="580.6" x2="8640.4" y2="-253.5"/><line x1="147.9" y1="581.1" x2="8331.3" y2="-213.8"/><line x1="150.9" y1="581.6" x2="8046.4" y2="-177.1"/><line x1="153.9" y1="582.0" x2="7783.0" y2="-143.3"/><line x1="156.9" y1="582.5" x2="7538.8" y2="-111.9"/><line x1="162.9" y1="583.4" x2="7099.9" y2="-55.5"/><line x1="165.8" y1="583.9" x2="6902.1" y2="-30.0"/><line x1="168.7" y1="584.3" x2="6716.8" y2="-6.2"/><line x1="171.6" y1="584.7" x2="6542.9" y2="16.2"/><line x1="174.5" y1="585.2" x2="6379.3" y2="37.2"/><line x1="177.4" y1="585.6" x2="6225.3" y2="57.0"/><line x1="180.2" y1="586.1" x2="6079.9" y2="75.7"/><line x1="183.1" y1="586.5" x2="5942.5" y2="93.4"/><line x1="185.9" y1="586.9" x2="5812.4" y2="110.1"/></g><g stroke="#474747" stroke-width="1"><line x1="-2661.3" y1="150.7" x2="188.7" y2="587.4"/><line x1="-3045.5" y1="58.1" x2="217.9" y2="584.9"/><line x1="-3603.8" y1="-76.5" x2="249.4" y2="582.3"/><line x1="-4489.3" y1="-290.0" x2="283.6" y2="579.4"/><line x1="-6108.9" y1="-680.4" x2="320.6" y2="576.3"/><line x1="-10021.7" y1="-1623.7" x2="361.0" y2="572.9"/><line x1="-32905.2" y1="-7140.4" x2="405.1" y2="569.2"/><line x1="-30571.4" y1="-7396.3" x2="453.6" y2="565.1"/><line x1="-26369.4" y1="-7219.9" x2="507.1" y2="560.6"/><line x1="-22167.4" y1="-7043.4" x2="566.4" y2="555.7"/><line x1="-17965.4" y1="-6866.9" x2="632.5" y2="550.1"/><line x1="-13763.5" y1="-6690.5" x2="706.8" y2="543.9"/><line x1="-5359.5" y1="-6337.5" x2="886.2" y2="528.8"/><line x1="-1157.6" y1="-6161.1" x2="996.1" y2="519.6"/><line x1="3044.4" y1="-5984.6" x2="1123.7" y2="508.9"/><line x1="7246.4" y1="-5808.1" x2="1273.8" y2="496.3"/><line x1="11448.4" y1="-5631.7" x2="1452.9" y2="481.3"/><line x1="15650.3" y1="-5455.2" x2="1670.3" y2="463.1"/><line x1="19852.3" y1="-5278.7" x2="1939.6" y2="440.5"/><line x1="24054.3" y1="-5102.3" x2="2282.1" y2="411.7"/><line x1="28256.3" y1="-4925.8" x2="2732.2" y2="374.0"/><line x1="32458.2" y1="-4749.3" x2="3350.3" y2="322.1"/><line x1="36660.2" y1="-4572.9" x2="4251.6" y2="246.5"/><line x1="40862.2" y1="-4396.4" x2="5689.0" y2="126.0"/><line x1="-2661.3" y1="150.7" x2="-34683.0" y2="-7569.0"/><line x1="-2215.3" y1="219.0" x2="-31015.0" y2="-7415.0"/><line x1="-1864.8" y1="272.8" x2="-27347.0" y2="-7260.9"/><line x1="-1582.0" y1="316.1" x2="-23679.0" y2="-7106.9"/><line x1="-1349.0" y1="351.8" x2="-20011.0" y2="-6952.8"/><line x1="-1153.8" y1="381.7" x2="-16343.0" y2="-6798.8"/><line x1="-987.9" y1="407.1" x2="-12675.0" y2="-6644.8"/><line x1="-845.1" y1="429.0" x2="-9007.0" y2="-6490.7"/><line x1="-720.8" y1="448.0" x2="-5339.0" y2="-6336.7"/><line x1="-611.8" y1="464.7" x2="-1671.0" y2="-6182.6"/><line x1="-515.4" y1="479.5" x2="1997.0" y2="-6028.6"/><line x1="-429.5" y1="492.7" x2="5665.0" y2="-5874.5"/><line x1="-283.0" y1="515.1" x2="13001.0" y2="-5566.5"/><line x1="-220.0" y1="524.7" x2="16669.0" y2="-5412.4"/><line x1="-162.7" y1="533.5" x2="20337.0" y2="-5258.4"/><line x1="-110.3" y1="541.6" x2="24005.0" y2="-5104.3"/><line x1="-62.2" y1="548.9" x2="27673.0" y2="-4950.3"/><line x1="-17.8" y1="555.7" x2="31341.0" y2="-4796.2"/><line x1="23.1" y1="562.0" x2="35009.0" y2="-4642.2"/><line x1="61.1" y1="567.8" x2="38677.0" y2="-4488.2"/><line x1="96.3" y1="573.2" x2="21981.5" y2="-1968.8"/><line x1="129.2" y1="578.2" x2="10686.4" y2="-516.6"/><line x1="159.9" y1="582.9" x2="7311.7" y2="-82.7"/><line x1="188.7" y1="587.4" x2="5689.0" y2="126.0"/></g><g stroke-width="1.2"><line x1="211.20000000000005" y1="142.2" x2="-352.4" y2="504.5" stroke="#555"/><line x1="211.20000000000005" y1="142.2" x2="-9561.5" y2="-6514.0" stroke="#555"/><line x1="211.20000000000005" y1="142.2" x2="9333.0" y2="-5720.5" stroke="#9a4c4c"/><line x1="211.20000000000005" y1="142.2" x2="790.6" y2="536.9" stroke="#4f8a4f"/></g><polygon points="240.8,41.2 331.3,115.2 336.5,148.6 186.2,232.3 92.0,179.8 96.3,148.5" fill="#b9ab89"/><polygon points="96.3,148.5 240.8,41.2 242.7,75.6 92.0,179.8" fill="#b1a382"/><polygon points="240.8,41.2 331.3,115.2 336.5,148.6 242.7,75.6" fill="#aa9c7c"/><polygon points="92.0,179.8 242.7,75.6 336.5,148.6 186.2,232.3" fill="#bfb190"/><polygon points="114.0,180.7 241.6,93.5 312.2,148.6 186.2,218.7" fill="#b2a584"/><polygon points="186.0,201.0 297.6,137.2 312.2,148.6 186.2,218.7" fill="#beb08e"/><polygon points="147.2,187.5 268.9,114.8 277.3,121.3 147.2,196.5" fill="#c3b593"/><polygon points="147.2,196.5 277.3,121.3 283.9,126.5 157.1,202.8" fill="#b5a786"/><polygon points="130.0,170.3 140.9,163.1 162.5,175.7 152.6,182.0" fill="#3434ee"/><polygon points="153.5,154.0 165.2,146.9 186.9,159.5 175.2,167.6" fill="#3434ee"/><polygon points="177.9,137.8 190.5,129.7 212.2,142.3 198.6,152.3" fill="#3434ee"/><polygon points="204.0,119.8 219.4,110.8 240.1,124.3 224.8,135.1" fill="#3434ee"/><polygon points="232.0,98.5 240.3,94.6 262.7,111.1 253.9,117.0" fill="#3434ee"/><polygon points="173.3,193.8 183.3,187.5 196.8,196.5 186.0,201.0" fill="#3434ee"/><polygon points="195.9,179.4 206.7,173.0 221.2,182.0 211.3,188.4" fill="#3434ee"/><polygon points="220.9,163.6 231.6,156.8 247.1,166.5 235.4,173.3" fill="#3434ee"/><polygon points="247.1,148.0 258.8,140.3 273.4,150.0 261.7,157.8" fill="#3434ee"/><polygon points="275.3,131.5 282.1,126.7 296.7,137.4 288.9,142.2" fill="#3434ee"/><polygon points="136.3,173.6 145.7,173.1 149.2,180.2" fill="#b3a583"/><polyline points="136.3,173.6 145.7,173.1 149.2,180.2" fill="none" stroke="#e8e0c0" stroke-width="0.8"/><polygon points="159.6,157.8 168.9,157.8 171.9,165.6" fill="#b3a583"/><polyline points="159.6,157.8 168.9,157.8 171.9,165.6" fill="none" stroke="#e8e0c0" stroke-width="0.8"/><polygon points="183.7,141.9 193.1,141.8 195.5,150.1" fill="#b3a583"/><polyline points="183.7,141.9 193.1,141.8 195.5,150.1" fill="none" stroke="#e8e0c0" stroke-width="0.8"/><polygon points="209.8,124.1 220.1,124.0 221.7,132.8" fill="#b3a583"/><polyline points="209.8,124.1 220.1,124.0 221.7,132.8" fill="none" stroke="#e8e0c0" stroke-width="0.8"/><path d="M173.3 193.8 Q183.0 204.0 196.8 196.5 L186.0 201.0 Z" fill="#3434ee"/><path d="M195.9 179.4 Q208.3 191.4 221.2 182.0 L211.3 188.4 Z" fill="#3434ee"/><path d="M220.9 163.6 Q232.4 176.3 247.1 166.5 L235.4 173.3 Z" fill="#3434ee"/><path d="M247.1 148.0 Q258.7 160.8 273.4 150.0 L261.7 157.8 Z" fill="#3434ee"/><path d="M275.3 131.5 Q285.9 145.2 296.7 137.4 L288.9 142.2 Z" fill="#3434ee"/><g stroke="#f3e5a6" stroke-width="1.25" fill="none" stroke-linecap="round"><line x1="240.8" y1="41.2" x2="331.3" y2="115.2"/><line x1="331.3" y1="115.2" x2="336.5" y2="148.6"/><line x1="336.5" y1="148.6" x2="186.2" y2="232.3"/><line x1="186.2" y1="232.3" x2="92.0" y2="179.8"/><line x1="92.0" y1="179.8" x2="96.3" y2="148.5"/><line x1="96.3" y1="148.5" x2="240.8" y2="41.2"/><line x1="240.8" y1="41.2" x2="242.7" y2="75.6"/><line x1="242.7" y1="75.6" x2="92.0" y2="179.8"/><line x1="242.7" y1="75.6" x2="336.5" y2="148.6"/><line x1="92.0" y1="179.8" x2="114.0" y2="180.7"/><line x1="242.7" y1="75.6" x2="241.6" y2="93.5"/><line x1="336.5" y1="148.6" x2="312.2" y2="148.6"/><line x1="186.2" y1="232.3" x2="186.2" y2="218.7"/><line x1="114.0" y1="180.7" x2="241.6" y2="93.5"/><line x1="241.6" y1="93.5" x2="312.2" y2="148.6"/><line x1="312.2" y1="148.6" x2="186.2" y2="218.7"/><line x1="186.2" y1="218.7" x2="114.0" y2="180.7"/><line x1="147.2" y1="187.5" x2="268.9" y2="114.8"/><line x1="147.2" y1="196.5" x2="277.3" y2="121.3"/><line x1="157.1" y1="202.8" x2="283.9" y2="126.5"/><line x1="147.2" y1="187.5" x2="147.2" y2="196.5"/><line x1="186.0" y1="201.0" x2="297.6" y2="137.2"/><line x1="186.0" y1="201.0" x2="186.2" y2="218.7"/><line x1="129.6" y1="170.1" x2="154.6" y2="183.1"/><line x1="140.3" y1="162.7" x2="164.8" y2="177.0"/><line x1="153.3" y1="153.9" x2="177.8" y2="169.2"/><line x1="164.3" y1="146.4" x2="190.6" y2="161.6"/><line x1="177.3" y1="137.4" x2="202.1" y2="154.7"/><line x1="189.5" y1="129.1" x2="217.6" y2="145.5"/><line x1="203.6" y1="119.5" x2="229.4" y2="138.5"/><line x1="217.8" y1="109.8" x2="246.3" y2="128.3"/><line x1="233.0" y1="99.4" x2="258.6" y2="121.0"/><line x1="240.2" y1="94.5" x2="268.3" y2="115.2"/><line x1="172.7" y1="193.4" x2="186.0" y2="201.0"/><line x1="182.9" y1="187.3" x2="195.4" y2="195.6"/><line x1="195.9" y1="179.4" x2="209.7" y2="187.5"/><line x1="206.7" y1="173.0" x2="220.3" y2="181.4"/><line x1="221.5" y1="164.0" x2="235.0" y2="173.0"/><line x1="232.5" y1="157.4" x2="246.8" y2="166.3"/><line x1="247.6" y1="148.3" x2="261.7" y2="157.8"/><line x1="259.8" y1="141.0" x2="274.3" y2="150.6"/><line x1="275.4" y1="131.6" x2="288.9" y2="142.2"/><line x1="282.7" y1="127.2" x2="297.0" y2="137.6"/></g></svg>
<svg class="a" style="left:655px;top:285px;" width="35" height="35" viewBox="0 0 35 35"><g stroke="#6e6e6e" stroke-width="1.1" fill="none"><path d="M8 21.2 L7.7 7"/><path d="M8 21.2 L22 12.2"/><path d="M8 21.2 L21.2 31"/></g></svg>
<div class="t" style="left:664.5px;top:285.4px;font-size:8px;color:#6e6e6e;">z</div>
<div class="t" style="left:679.0px;top:291.1px;font-size:8px;color:#6e6e6e;">x</div>
<div class="t" style="left:678.4px;top:309.4px;font-size:8px;color:#6e6e6e;">y</div>
<div class="a" style="left:639px;top:40px;width:61px;height:12px;background:#1d5df2"></div>
<div class="t" style="left:643.0px;top:41.2px;font-size:9px;color:#ffffff;font-weight:bold;transform:scaleX(0.871);transform-origin:0 0;">Perspective</div>
<div class="a" style="left:692px;top:41px;width:1px;height:10px;background:#9ab8ff;"></div>
<svg class="a" style="left:694px;top:44px;" width="5" height="4" viewBox="0 0 5 4"><path d="M0 0 L4 0 L2 3 Z" fill="#fff"/></svg>
<div class="a" style="left:1062px;top:39px;width:218px;height:599px;background:#323232;"></div>
<div class="a" style="left:1278px;top:38px;width:2px;height:600px;background:#3a3a3a;"></div>
<svg class="a" style="left:1062px;top:38px;" width="218" height="12" viewBox="0 0 218 12"><circle cx="105" cy="5" r="1.1" fill="#5a5a5a"/><circle cx="109" cy="5" r="1.1" fill="#5a5a5a"/><circle cx="113" cy="5" r="1.1" fill="#5a5a5a"/><circle cx="117" cy="5" r="1.1" fill="#5a5a5a"/><g transform="translate(210,5)" fill="#d6d6d6"><rect x="-1" y="-4.3" width="2" height="2.6" rx="0.6" transform="rotate(0)"/><rect x="-1" y="-4.3" width="2" height="2.6" rx="0.6" transform="rotate(45)"/><rect x="-1" y="-4.3" width="2" height="2.6" rx="0.6" transform="rotate(90)"/><rect x="-1" y="-4.3" width="2" height="2.6" rx="0.6" transform="rotate(135)"/><rect x="-1" y="-4.3" width="2" height="2.6" rx="0.6" transform="rotate(180)"/><rect x="-1" y="-4.3" width="2" height="2.6" rx="0.6" transform="rotate(225)"/><rect x="-1" y="-4.3" width="2" height="2.6" rx="0.6" transform="rotate(270)"/><rect x="-1" y="-4.3" width="2" height="2.6" rx="0.6" transform="rotate(315)"/><circle r="3.0"/><circle r="1.25" fill="#303030"/></g></svg>
<svg class="a" style="left:1062px;top:38px;" width="218" height="60" viewBox="0 0 218 60"><g transform="translate(8.5,19.0)"><path d="M-6 -3 L-2 -3 L-1 -2 L5 -2 L5 0 L-4 0 Z" fill="#f5e070"/><path d="M-7 5 L-4 -1 L7 -1 L4 5 Z" fill="#e8b820"/></g><g transform="translate(28.5,19.0)"><rect x="-6" y="-6" width="12" height="12" fill="#c8c070"/><rect x="-3.5" y="-5" width="7" height="4" fill="#ddd"/><rect x="-3" y="1.5" width="6" height="4" fill="#888"/></g><g transform="translate(47.5,19.0)"><rect x="-7" y="-5" width="14" height="3.5" fill="#40c040"/><rect x="-7" y="-1.5" width="14" height="3" fill="#e0c040"/><rect x="-7" y="1.5" width="14" height="3.5" fill="#c040c0"/><circle cx="-6" cy="5" r="1" fill="#fff"/><circle cx="6" cy="5" r="1" fill="#fff"/></g><g transform="translate(66.0,19.0)"><path d="M0 -7 V7 M-7 0 H7" stroke="#c02828" stroke-width="3"/><circle r="3" fill="#c83030"/></g><g transform="translate(84.5,19.0)"><path d="M-5 -5 L5 5 M5 -5 L-5 5" stroke="#f06070" stroke-width="2.4"/></g><g transform="translate(106.0,19.0)"><path d="M-7 2 L0 -1 L7 2 L0 5 Z" fill="#e0e0e0"/><path d="M-7 -1 L0 -4 L7 -1 L0 2 Z" fill="#fff" stroke="#888" stroke-width="0.5"/><path d="M-4 -5 L3 -7 L7 -4 L0 -2 Z" fill="#8fa0e8"/></g><g transform="translate(122.5,19.0)"><path d="M-6 -4 L-2 -7 L1 -5 L1 6 L-6 6 Z" fill="#f0f0f0"/><path d="M2 -3 L6 -6 L6 4 L2 7 Z" fill="#2040c0"/></g><g transform="translate(140.0,19.0)"><path d="M-6 -3 L3 -7 L7 -4 L-2 4 L-6 3 Z" fill="#a8b4ff"/></g><g transform="translate(159.5,19.0)"><path d="M-7 -4 L0 -7 L6 -4 L6 4 L0 7 L-7 4 Z" fill="#e02020"/><path d="M0 -2 L6 -4 L6 4 L0 7 Z" fill="#30b030"/><path d="M-4 -2 L0 -3 L0 4 L-4 3 Z" fill="#fff"/></g><g transform="translate(178.0,19.0)"><rect x="-7" y="-2" width="14" height="4" fill="#e0e0e0"/><path d="M-1 -7 L3 -5 L3 6 L-1 8 Z" fill="#8090e0"/></g><g transform="translate(196.5,19.0)"><g stroke="#d8d8d8" stroke-width="1" fill="none"><circle r="6.5"/><ellipse rx="3" ry="6.5"/><path d="M-6.5 0 H6.5 M-5.5 -3.3 H5.5 M-5.5 3.3 H5.5"/></g></g><g transform="translate(9.0,38.0)"><rect x="-8" y="-8" width="16" height="16" fill="none" stroke="#cfcfcf" stroke-width="1" stroke-dasharray="1.2 1.2"/><path d="M-8 -2.7 H8 M-8 2.7 H8 M-2.7 -8 V8 M2.7 -8 V8" stroke="#cfcfcf" stroke-width="0.8" stroke-dasharray="1.2 1.2"/><circle r="5" fill="#e8e8e8"/><path d="M-5 0 H5" stroke="#777" stroke-width="0.8"/></g><g transform="translate(28.0,38.0)"><circle r="7" fill="#222" stroke="#666"/><circle r="5.5" fill="#d0d0d0"/><path d="M-5.5 0 H5.5 M0 -5.5 V5.5" stroke="#555" stroke-width="0.8"/></g><g transform="translate(47.5,38.0)"><rect x="-8" y="-8" width="16" height="16" fill="none" stroke="#cfcfcf" stroke-width="1" stroke-dasharray="1.2 1.2"/><path d="M-8 -2.7 H8 M-8 2.7 H8 M-2.7 -8 V8 M2.7 -8 V8" stroke="#cfcfcf" stroke-width="0.8" stroke-dasharray="1.2 1.2"/><circle r="6" fill="#1830c8"/><circle cx="-2" cy="-2" r="2" fill="#8fb0ff"/></g><g transform="translate(66.0,38.0)"><circle r="4.5" fill="none" stroke="#d8d8d8" stroke-width="1.3"/><path d="M-7 -7 h3 M-7 -7 v3 M7 -7 h-3 M7 -7 v3 M-7 7 h3 M-7 7 v-3 M7 7 h-3 M7 7 v-3 M-3.5 3.5 L-6.5 6.5" stroke="#e8e8e8" stroke-width="1.2" fill="none"/></g><g transform="translate(84.5,38.0)"><path d="M-7 1 Q0 -7 7 0 L5 1 Q0 -4 -5 2 L-3 4 L-8 4 Z" fill="#d8d8d8"/></g><g transform="translate(106.0,38.0)"><path d="M-6 -2 Q0 -7 6 -3" stroke="#aaa" stroke-width="2" fill="none"/><path d="M-3 1 L2 -1 L6 1 L6 6 L1 8 L-3 6 Z" fill="#f0d020"/></g><g transform="translate(122.0,38.0)"><rect x="-6.5" y="-6.5" width="13" height="13" fill="#d8d8d8"/><path d="M0 -6.5 V6.5 M-6.5 0 H6.5" stroke="#999" stroke-width="0.8"/></g><g transform="translate(140.0,38.0)"><circle cx="0" cy="-2" r="3.5" fill="#f02020"/><circle cx="-2.5" cy="2" r="3.5" fill="#2040f0" opacity="0.9"/><circle cx="2.5" cy="2" r="3.5" fill="#30d030" opacity="0.9"/><circle cx="0" cy="1" r="1.5" fill="#fff"/></g></svg>
<div class="a" style="left:1062px;top:99px;width:216px;height:1px;background:#464646;"></div>
<div class="a" style="left:1062px;top:100px;width:216px;height:13px;background:#303030;"></div>
<div class="t" style="left:1066.0px;top:102.0px;font-size:8.5px;color:#7f7f7f;transform:scaleX(0.941);transform-origin:0 0;">Invisible Setting</div>
<svg class="a" style="left:1062px;top:99px;" width="218" height="14" viewBox="0 0 218 14"><g transform="translate(210,7.5)" fill="#d6d6d6"><rect x="-1" y="-4.3" width="2" height="2.6" rx="0.6" transform="rotate(0)"/><rect x="-1" y="-4.3" width="2" height="2.6" rx="0.6" transform="rotate(45)"/><rect x="-1" y="-4.3" width="2" height="2.6" rx="0.6" transform="rotate(90)"/><rect x="-1" y="-4.3" width="2" height="2.6" rx="0.6" transform="rotate(135)"/><rect x="-1" y="-4.3" width="2" height="2.6" rx="0.6" transform="rotate(180)"/><rect x="-1" y="-4.3" width="2" height="2.6" rx="0.6" transform="rotate(225)"/><rect x="-1" y="-4.3" width="2" height="2.6" rx="0.6" transform="rotate(270)"/><rect x="-1" y="-4.3" width="2" height="2.6" rx="0.6" transform="rotate(315)"/><circle r="3.0"/><circle r="1.25" fill="#303030"/></g></svg>
<div class="a" style="left:1063px;top:113px;width:188px;height:523px;background:#232323;"></div>
<div class="a" style="left:1251px;top:113px;width:12px;height:523px;background:#f0f0f0;"></div>
<div class="a" style="left:1257px;top:125px;width:1px;height:480px;background:#9a9a9a;"></div>
<div class="a" style="left:1263px;top:113px;width:15px;height:523px;background:#3a3a3a;"></div>
<svg class="a" style="left:1263px;top:113px;" width="17" height="300" viewBox="0 0 17 300"><defs><linearGradient id="rb"><stop offset="0" stop-color="#f02020"/><stop offset="0.5" stop-color="#20e020"/><stop offset="1" stop-color="#2040f0"/></linearGradient></defs><rect x="1" y="265" width="16" height="24" rx="3" fill="#2d2d2d"/><g transform="translate(9,11.6)"><path d="M-5 -2 L0 -4 L5 -1 L0 2 Z" fill="#f06040"/><path d="M-5 -1 L0 2 L5 0 L5 2 L0 4 L-5 1 Z" fill="#2a2a80"/></g><g transform="translate(9,36.6)"><circle r="5" fill="none" stroke="url(#rb)" stroke-width="2.5"/></g><g transform="translate(9,60.0)"><rect x="-5" y="-4" width="10" height="8" rx="1" fill="#d8d8d8"/></g><g transform="translate(9,85.5)"><rect x="-5" y="-4" width="10" height="8" rx="1" fill="#3050c0"/><circle r="2" fill="none" stroke="#fff" stroke-width="1"/></g><g transform="translate(9,108.5)"><path d="M-5 -4 L-3 -4 L0 1 L3 -4 L5 -4 L1 4 L-1 4 Z" fill="#e8c030"/><path d="M-2 -3 L2 -3 L0 0 Z" fill="#fff"/></g><g transform="translate(9,131.4)"><circle r="4" fill="#2838c0"/><circle cx="-1" cy="-1" r="1.3" fill="#9ab"/></g><g transform="translate(9,155.0)"><path d="M-4 4 L4 -4" stroke="#e02020" stroke-width="2.5"/><path d="M-4 4 L0 0" stroke="#fff" stroke-width="2.5"/></g><g transform="translate(9,180.0)"><path d="M-5 -3 L-2 -5 L5 3 L2 5 Z" fill="#e0e0e0"/></g><g transform="translate(9,204.5)"><path d="M-5 -3 L-3 -3 L-3 0 L3 0 L3 -3 L5 -3 L5 3 L-5 3 Z" fill="#e8c020"/><path d="M-2 0 L2 0 L0 2 Z" fill="#fff"/></g><g transform="translate(9,230.0)"><path d="M-5 -1 L-3.5 -3 L-3 0 L3 0 L3.5 -3 L5 -1 L5 3 L-5 3 Z" fill="#e8c020"/><path d="M-1.5 0 L1.5 0 L0 2 Z" fill="#fff"/></g><g transform="translate(9,252.5)"><circle r="3" fill="none" stroke="#c8b060" stroke-width="1.5"/><circle r="5" fill="none" stroke="#c8b060" stroke-width="1" stroke-dasharray="2 2"/></g><g transform="translate(9,277.0)"><rect x="-5" y="-5" width="10" height="10" fill="none" stroke="#e8c030" stroke-width="1.2"/><path d="M-5 -1.7 H5 M-5 1.7 H5 M-1.7 -5 V5 M1.7 -5 V5" stroke="#a08830" stroke-width="0.8"/></g></svg>
<div class="a" style="left:1064px;top:113.5px;width:180px;height:16px;background:#1f5cf6;"></div>
<div class="t" style="left:1130.5px;top:115.9px;font-size:10.5px;color:#ffffff;font-weight:bold;">Modifiers</div>
<div class="t" style="left:1112.5px;top:131.9px;font-size:10.5px;color:#ffffff;font-weight:bold;transform:scaleX(1.031);transform-origin:0 0;">Invisible Setting</div>
<svg class="a" style="left:1155px;top:150px;" width="70" height="18" viewBox="0 0 70 18"><path d="M2 8.6 L6.8 14 L17.6 3.5" stroke="#22dd77" stroke-width="2.5" fill="none" stroke-linecap="round"/><path d="M31.2 3.8 L40.8 12.8 M40.8 3.8 L31.2 12.8" stroke="#f58a98" stroke-width="2.4" stroke-linecap="round"/><path d="M61 3.6 A6.8 6.8 0 1 1 55.8 6" stroke="#1e82f0" stroke-width="2.4" fill="none" stroke-linecap="round"/><path d="M59.3 0 L64.6 3.6 L59.3 7.2 Z" fill="#1e82f0"/></svg>
<div class="t" style="left:1070.0px;top:178.7px;font-size:9px;color:#eeeeee;font-weight:bold;transform:scaleX(0.929);transform-origin:0 0;">No. of Gems:</div>
<div class="t" style="left:1130.0px;top:178.7px;font-size:9px;color:#eeeeee;font-weight:bold;">0</div>
<div class="t" style="left:1070.0px;top:194.2px;font-size:9px;color:#eeeeee;font-weight:bold;transform:scaleX(0.932);transform-origin:0 0;">Total Carat:</div>
<div class="t" style="left:1130.5px;top:194.7px;font-size:9px;color:#e8e8e8;transform:scaleX(0.910);transform-origin:0 0;">0.000</div>
<div class="t" style="left:1154.5px;top:193.8px;font-size:8px;color:#e8e8e8;transform:scaleX(1.045);transform-origin:0 0;">ct</div>
<svg class="a" style="left:1071px;top:212px;" width="18" height="18" viewBox="0 0 18 18"><rect x="0.5" y="0.5" width="17" height="17" rx="3" fill="#1a1a1a" stroke="#8a8a8a" stroke-width="1"/><circle cx="5.5" cy="5.5" r="3" fill="none" stroke="#e8c020" stroke-width="1.3"/><rect x="10" y="3" width="5" height="5" fill="none" stroke="#ddd" stroke-width="1.2"/><path d="M5 10 L7 14 A2 2 0 1 1 3.5 14 Z" fill="none" stroke="#ddd" stroke-width="1"/><path d="M12.5 15 L10 12 A1.5 1.5 0 0 1 12.5 10.5 A1.5 1.5 0 0 1 15 12 Z" fill="none" stroke="#ddd" stroke-width="1"/></svg>
<div class="t" style="left:1098.5px;top:216.0px;font-size:8.5px;color:#dddddd;transform:scaleX(0.882);transform-origin:0 0;">Gem Shape</div>
<div class="a" style="left:1164px;top:215px;width:52px;height:14px;background:#1e1e1e;border:1px solid #bcbcbc"></div>
<div class="a" style="left:1204px;top:216px;width:11px;height:12px;background:#f0f0f0;"></div>
<svg class="a" style="left:1207px;top:220px;" width="6" height="4" viewBox="0 0 6 4"><path d="M0 0 L5 0 L2.5 3 Z" fill="#333"/></svg>
<div class="t" style="left:1074.5px;top:245.5px;font-size:8.5px;color:#e2e2e2;transform:scaleX(0.884);transform-origin:0 0;">Gem Size</div>
<div class="t" style="left:1158.0px;top:245.5px;font-size:8.5px;color:#e2e2e2;transform:scaleX(0.893);transform-origin:0 0;">Gem Spacing</div>
<svg class="a" style="left:1073.5px;top:258.5px;" width="18" height="18" viewBox="0 0 18 18"><rect x="0.5" y="0.5" width="17" height="17" rx="3" fill="#1a1a1a" stroke="#8a8a8a" stroke-width="1"/><circle cx="9" cy="9" r="6.5" fill="none" stroke="#fff" stroke-width="1.3"/><path d="M3 9 H15 M3 9 L5 7 M3 9 L5 11 M15 9 L13 7 M15 9 L13 11" stroke="#f2c318" stroke-width="1.2" fill="none"/></svg>
<div class="a" style="left:1098px;top:259.5px;width:39px;height:16px;background:#1c1c1c;border:1px solid #6e6e6e"></div>
<div class="a" style="left:1125px;top:260.5px;width:11px;height:14px;background:#e6e6e6;"></div>
<div class="a" style="left:1125px;top:267.5px;width:11px;height:1px;background:#aaa;"></div>
<svg class="a" style="left:1128px;top:262.5px;" width="6" height="11" viewBox="0 0 6 11"><path d="M0 3 L2.5 0 L5 3 Z M0 8 L5 8 L2.5 11 Z" fill="#444"/></svg>
<div class="t" style="left:1103.3px;top:262.5px;font-size:9.5px;color:#f2c318;font-weight:bold;">1.50</div>
<svg class="a" style="left:1157px;top:258.5px;" width="18" height="18" viewBox="0 0 18 18"><rect x="0.5" y="0.5" width="17" height="17" rx="3" fill="#1a1a1a" stroke="#8a8a8a" stroke-width="1"/><path d="M1 11 L11 1 L17 1 L17 7 L7 17 L1 17 Z" fill="#fff"/><path d="M4 14 L14 4 M4 14 L4 10 M4 14 L8 14 M14 4 L10 4 M14 4 L14 8" stroke="#f2c318" stroke-width="1.8" fill="none"/></svg>
<div class="a" style="left:1181.5px;top:259.5px;width:39px;height:16px;background:#1c1c1c;border:1px solid #6e6e6e"></div>
<div class="a" style="left:1208.5px;top:260.5px;width:11px;height:14px;background:#e6e6e6;"></div>
<div class="a" style="left:1208.5px;top:267.5px;width:11px;height:1px;background:#aaa;"></div>
<svg class="a" style="left:1211.5px;top:262.5px;" width="6" height="11" viewBox="0 0 6 11"><path d="M0 3 L2.5 0 L5 3 Z M0 8 L5 8 L2.5 11 Z" fill="#444"/></svg>
<div class="t" style="left:1186.8px;top:262.5px;font-size:9.5px;color:#f2c318;font-weight:bold;">0.10</div>
<div class="t" style="left:1074.5px;top:299.5px;font-size:8.5px;color:#e2e2e2;transform:scaleX(0.941);transform-origin:0 0;">Rows</div>
<div class="t" style="left:1158.0px;top:299.5px;font-size:8.5px;color:#e2e2e2;transform:scaleX(0.924);transform-origin:0 0;">Columns</div>
<svg class="a" style="left:1073.5px;top:312.5px;" width="18" height="18" viewBox="0 0 18 18"><rect x="0.5" y="0.5" width="17" height="17" rx="3" fill="#1a1a1a" stroke="#8a8a8a" stroke-width="1"/><rect x="1.5" y="1.5" width="15" height="15" rx="2" fill="#6a6a6a"/><circle cx="4.6" cy="4.6" r="1.9" fill="#c8c8c8"/><circle cx="4.6" cy="4.6" r="0.9" fill="#222"/><circle cx="4.6" cy="9.0" r="1.9" fill="#c8c8c8"/><circle cx="4.6" cy="9.0" r="0.9" fill="#222"/><circle cx="4.6" cy="13.4" r="1.9" fill="#c8c8c8"/><circle cx="4.6" cy="13.4" r="0.9" fill="#222"/><circle cx="9.0" cy="4.6" r="1.9" fill="#c8c8c8"/><circle cx="9.0" cy="4.6" r="0.9" fill="#222"/><circle cx="9.0" cy="9.0" r="1.9" fill="#c8c8c8"/><circle cx="9.0" cy="9.0" r="0.9" fill="#222"/><circle cx="9.0" cy="13.4" r="1.9" fill="#c8c8c8"/><circle cx="9.0" cy="13.4" r="0.9" fill="#222"/><circle cx="13.4" cy="4.6" r="1.9" fill="#c8c8c8"/><circle cx="13.4" cy="4.6" r="0.9" fill="#222"/><circle cx="13.4" cy="9.0" r="1.9" fill="#c8c8c8"/><circle cx="13.4" cy="9.0" r="0.9" fill="#222"/><circle cx="13.4" cy="13.4" r="1.9" fill="#c8c8c8"/><circle cx="13.4" cy="13.4" r="0.9" fill="#222"/><path d="M2 6.8 H16 M2 11.2 H16" stroke="#e8c020" stroke-width="0.8"/></svg>
<div class="a" style="left:1098px;top:313.5px;width:39px;height:16px;background:#1c1c1c;border:1px solid #6e6e6e"></div>
<div class="a" style="left:1125px;top:314.5px;width:11px;height:14px;background:#e6e6e6;"></div>
<div class="a" style="left:1125px;top:321.5px;width:11px;height:1px;background:#aaa;"></div>
<svg class="a" style="left:1128px;top:316.5px;" width="6" height="11" viewBox="0 0 6 11"><path d="M0 3 L2.5 0 L5 3 Z M0 8 L5 8 L2.5 11 Z" fill="#444"/></svg>
<div class="t" style="left:1109.9px;top:316.5px;font-size:9.5px;color:#f2c318;font-weight:bold;">3</div>
<svg class="a" style="left:1157px;top:312.5px;" width="18" height="18" viewBox="0 0 18 18"><rect x="0.5" y="0.5" width="17" height="17" rx="3" fill="#1a1a1a" stroke="#8a8a8a" stroke-width="1"/><rect x="1.5" y="1.5" width="15" height="15" rx="2" fill="#6a6a6a"/><circle cx="4.6" cy="4.6" r="1.9" fill="#c8c8c8"/><circle cx="4.6" cy="4.6" r="0.9" fill="#222"/><circle cx="4.6" cy="9.0" r="1.9" fill="#c8c8c8"/><circle cx="4.6" cy="9.0" r="0.9" fill="#222"/><circle cx="4.6" cy="13.4" r="1.9" fill="#c8c8c8"/><circle cx="4.6" cy="13.4" r="0.9" fill="#222"/><circle cx="9.0" cy="4.6" r="1.9" fill="#c8c8c8"/><circle cx="9.0" cy="4.6" r="0.9" fill="#222"/><circle cx="9.0" cy="9.0" r="1.9" fill="#c8c8c8"/><circle cx="9.0" cy="9.0" r="0.9" fill="#222"/><circle cx="9.0" cy="13.4" r="1.9" fill="#c8c8c8"/><circle cx="9.0" cy="13.4" r="0.9" fill="#222"/><circle cx="13.4" cy="4.6" r="1.9" fill="#c8c8c8"/><circle cx="13.4" cy="4.6" r="0.9" fill="#222"/><circle cx="13.4" cy="9.0" r="1.9" fill="#c8c8c8"/><circle cx="13.4" cy="9.0" r="0.9" fill="#222"/><circle cx="13.4" cy="13.4" r="1.9" fill="#c8c8c8"/><circle cx="13.4" cy="13.4" r="0.9" fill="#222"/><path d="M6.8 2 V16 M11.2 2 V16" stroke="#e8c020" stroke-width="0.8"/></svg>
<div class="a" style="left:1181.5px;top:313.5px;width:39px;height:16px;background:#1c1c1c;border:1px solid #6e6e6e"></div>
<div class="a" style="left:1208.5px;top:314.5px;width:11px;height:14px;background:#e6e6e6;"></div>
<div class="a" style="left:1208.5px;top:321.5px;width:11px;height:1px;background:#aaa;"></div>
<svg class="a" style="left:1211.5px;top:316.5px;" width="6" height="11" viewBox="0 0 6 11"><path d="M0 3 L2.5 0 L5 3 Z M0 8 L5 8 L2.5 11 Z" fill="#444"/></svg>
<div class="t" style="left:1193.4px;top:316.5px;font-size:9.5px;color:#f2c318;font-weight:bold;">3</div>
<div class="t" style="left:1074.5px;top:353.2px;font-size:8.5px;color:#e2e2e2;transform:scaleX(0.899);transform-origin:0 0;">Outer Wall Height</div>
<div class="t" style="left:1158.0px;top:353.2px;font-size:8.5px;color:#e2e2e2;transform:scaleX(0.859);transform-origin:0 0;">Outer Wall Thickness</div>
<svg class="a" style="left:1073.5px;top:367px;" width="18" height="18" viewBox="0 0 18 18"><rect x="0.5" y="0.5" width="17" height="17" rx="3" fill="#1a1a1a" stroke="#8a8a8a" stroke-width="1"/><path d="M3 10 L12 5 L16 7 L16 11 L7 16 L3 14 Z" fill="#f4f4f4"/><rect x="1" y="10" width="3" height="4" fill="#f2c318"/></svg>
<div class="a" style="left:1098px;top:368px;width:39px;height:16px;background:#1c1c1c;border:1px solid #6e6e6e"></div>
<div class="a" style="left:1125px;top:369px;width:11px;height:14px;background:#e6e6e6;"></div>
<div class="a" style="left:1125px;top:376px;width:11px;height:1px;background:#aaa;"></div>
<svg class="a" style="left:1128px;top:371px;" width="6" height="11" viewBox="0 0 6 11"><path d="M0 3 L2.5 0 L5 3 Z M0 8 L5 8 L2.5 11 Z" fill="#444"/></svg>
<div class="t" style="left:1103.3px;top:371.0px;font-size:9.5px;color:#f2c318;font-weight:bold;">0.60</div>
<svg class="a" style="left:1157px;top:367px;" width="18" height="18" viewBox="0 0 18 18"><rect x="0.5" y="0.5" width="17" height="17" rx="3" fill="#1a1a1a" stroke="#8a8a8a" stroke-width="1"/><path d="M4 7 L12 4 L15 6 L15 12 L7 16 L4 14 Z" fill="#b0b0b0"/><rect x="4" y="14" width="4" height="3" fill="#f2c318"/></svg>
<div class="a" style="left:1181.5px;top:368px;width:39px;height:16px;background:#1c1c1c;border:1px solid #6e6e6e"></div>
<div class="a" style="left:1208.5px;top:369px;width:11px;height:14px;background:#e6e6e6;"></div>
<div class="a" style="left:1208.5px;top:376px;width:11px;height:1px;background:#aaa;"></div>
<svg class="a" style="left:1211.5px;top:371px;" width="6" height="11" viewBox="0 0 6 11"><path d="M0 3 L2.5 0 L5 3 Z M0 8 L5 8 L2.5 11 Z" fill="#444"/></svg>
<div class="t" style="left:1186.8px;top:371.0px;font-size:9.5px;color:#f2c318;font-weight:bold;">0.60</div>
<div class="t" style="left:1074.0px;top:406.8px;font-size:8.5px;color:#e2e2e2;transform:scaleX(0.854);transform-origin:0 0;">Setting Wall Thickness</div>
<div class="t" style="left:1156.8px;top:406.8px;font-size:8.5px;color:#e2e2e2;transform:scaleX(0.889);transform-origin:0 0;">Setting Wall Height</div>
<svg class="a" style="left:1073px;top:420px;" width="18" height="18" viewBox="0 0 18 18"><rect x="0.5" y="0.5" width="17" height="17" rx="3" fill="#1a1a1a" stroke="#8a8a8a" stroke-width="1"/><path d="M4 7 L12 4 L15 6 L15 12 L7 16 L4 14 Z" fill="#b0b0b0"/><rect x="4" y="14" width="4" height="3" fill="#f2c318"/></svg>
<div class="a" style="left:1097.5px;top:421px;width:39px;height:16px;background:#1c1c1c;border:1px solid #6e6e6e"></div>
<div class="a" style="left:1124.5px;top:422px;width:11px;height:14px;background:#e6e6e6;"></div>
<div class="a" style="left:1124.5px;top:429px;width:11px;height:1px;background:#aaa;"></div>
<svg class="a" style="left:1127.5px;top:424px;" width="6" height="11" viewBox="0 0 6 11"><path d="M0 3 L2.5 0 L5 3 Z M0 8 L5 8 L2.5 11 Z" fill="#444"/></svg>
<div class="t" style="left:1102.8px;top:424.0px;font-size:9.5px;color:#f2c318;font-weight:bold;">0.60</div>
<svg class="a" style="left:1156px;top:420px;" width="18" height="18" viewBox="0 0 18 18"><rect x="0.5" y="0.5" width="17" height="17" rx="3" fill="#1a1a1a" stroke="#8a8a8a" stroke-width="1"/><path d="M3 10 L12 5 L16 7 L16 11 L7 16 L3 14 Z" fill="#f4f4f4"/><rect x="1" y="10" width="3" height="4" fill="#f2c318"/></svg>
<div class="a" style="left:1180px;top:421px;width:39px;height:16px;background:#1c1c1c;border:1px solid #6e6e6e"></div>
<div class="a" style="left:1207px;top:422px;width:11px;height:14px;background:#e6e6e6;"></div>
<div class="a" style="left:1207px;top:429px;width:11px;height:1px;background:#aaa;"></div>
<svg class="a" style="left:1210px;top:424px;" width="6" height="11" viewBox="0 0 6 11"><path d="M0 3 L2.5 0 L5 3 Z M0 8 L5 8 L2.5 11 Z" fill="#444"/></svg>
<div class="t" style="left:1185.3px;top:424.0px;font-size:9.5px;color:#f2c318;font-weight:bold;">0.60</div>
<div class="t" style="left:1074.5px;top:461.8px;font-size:8.5px;color:#e2e2e2;transform:scaleX(0.872);transform-origin:0 0;">Support Wall Count</div>
<div class="t" style="left:1158.0px;top:461.8px;font-size:8.5px;color:#e2e2e2;transform:scaleX(0.892);transform-origin:0 0;">Support Wall Size</div>
<svg class="a" style="left:1073.5px;top:475px;" width="18" height="18" viewBox="0 0 18 18"><rect x="0.5" y="0.5" width="17" height="17" rx="3" fill="#1a1a1a" stroke="#8a8a8a" stroke-width="1"/><rect x="1" y="1" width="16" height="4" fill="#aaa"/><path d="M2 9 L15 3" stroke="#f2c318" stroke-width="2"/><rect x="3" y="10" width="6" height="6" fill="#f2c318"/><path d="M12 10 V16 M9 13 H15" stroke="#f2c318" stroke-width="1.8"/></svg>
<div class="a" style="left:1098px;top:476px;width:39px;height:16px;background:#1c1c1c;border:1px solid #6e6e6e"></div>
<div class="a" style="left:1125px;top:477px;width:11px;height:14px;background:#e6e6e6;"></div>
<div class="a" style="left:1125px;top:484px;width:11px;height:1px;background:#aaa;"></div>
<svg class="a" style="left:1128px;top:479px;" width="6" height="11" viewBox="0 0 6 11"><path d="M0 3 L2.5 0 L5 3 Z M0 8 L5 8 L2.5 11 Z" fill="#444"/></svg>
<div class="t" style="left:1109.9px;top:479.0px;font-size:9.5px;color:#f2c318;font-weight:bold;">1</div>
<svg class="a" style="left:1157px;top:475px;" width="18" height="18" viewBox="0 0 18 18"><rect x="0.5" y="0.5" width="17" height="17" rx="3" fill="#1a1a1a" stroke="#8a8a8a" stroke-width="1"/><rect x="1" y="1" width="16" height="4" fill="#aaa"/><path d="M2 9 L15 3" stroke="#f2c318" stroke-width="2"/><rect x="3" y="10" width="8" height="6" fill="#f2c318"/><rect x="12" y="10" width="2" height="6" fill="#f2c318"/></svg>
<div class="a" style="left:1181.5px;top:476px;width:39px;height:16px;background:#1c1c1c;border:1px solid #6e6e6e"></div>
<div class="a" style="left:1208.5px;top:477px;width:11px;height:14px;background:#e6e6e6;"></div>
<div class="a" style="left:1208.5px;top:484px;width:11px;height:1px;background:#aaa;"></div>
<svg class="a" style="left:1211.5px;top:479px;" width="6" height="11" viewBox="0 0 6 11"><path d="M0 3 L2.5 0 L5 3 Z M0 8 L5 8 L2.5 11 Z" fill="#444"/></svg>
<div class="t" style="left:1186.8px;top:479.0px;font-size:9.5px;color:#f2c318;font-weight:bold;">0.80</div>
<svg class="a" style="left:1074.5px;top:510.5px;" width="19" height="19" viewBox="0 0 19 19"><rect x="1" y="1" width="5" height="5" rx="1" fill="#cfcfcf"/><circle cx="3.5" cy="3.5" r="1" fill="#333"/><rect x="1" y="7" width="5" height="5" rx="1" fill="#cfcfcf"/><circle cx="3.5" cy="9.5" r="1" fill="#333"/><rect x="1" y="13" width="5" height="5" rx="1" fill="#cfcfcf"/><circle cx="3.5" cy="15.5" r="1" fill="#333"/><rect x="7" y="1" width="5" height="5" rx="1" fill="#cfcfcf"/><circle cx="9.5" cy="3.5" r="1" fill="#333"/><rect x="7" y="7" width="5" height="5" rx="1" fill="#cfcfcf"/><circle cx="9.5" cy="9.5" r="1" fill="#333"/><rect x="7" y="13" width="5" height="5" rx="1" fill="#cfcfcf"/><circle cx="9.5" cy="15.5" r="1" fill="#333"/><rect x="13" y="1" width="5" height="5" rx="1" fill="#cfcfcf"/><circle cx="15.5" cy="3.5" r="1" fill="#333"/><rect x="13" y="7" width="5" height="5" rx="1" fill="#cfcfcf"/><circle cx="15.5" cy="9.5" r="1" fill="#333"/><rect x="13" y="13" width="5" height="5" rx="1" fill="#cfcfcf"/><circle cx="15.5" cy="15.5" r="1" fill="#333"/></svg>
<div class="a" style="left:1103px;top:515.5px;width:9px;height:9px;background:#f2f2f2;border-radius:1px"></div>
<div class="t" style="left:1114.0px;top:516.0px;font-size:8.5px;color:#e0e0e0;transform:scaleX(0.947);transform-origin:0 0;">Open Invisible</div>
<div class="t" style="left:1074.5px;top:546.1px;font-size:8.5px;color:#e2e2e2;transform:scaleX(0.974);transform-origin:0 0;">Wall Height</div>
<svg class="a" style="left:1074px;top:559.5px;" width="18" height="18" viewBox="0 0 18 18"><rect x="0.5" y="0.5" width="17" height="17" rx="3" fill="#1a1a1a" stroke="#8a8a8a" stroke-width="1"/><path d="M6 2 V16" stroke="#fff" stroke-width="1.8"/><path d="M1 16 L5 12 M1 12 H5 V16" stroke="#fff" stroke-width="1.2" fill="none"/><path d="M12 3 L9 6 H15 Z M12 13 L9 10 H15 Z" fill="#f2c318"/><rect x="11" y="6" width="2" height="4" fill="#f2c318"/></svg>
<div class="a" style="left:1098px;top:560px;width:39px;height:16px;background:#1c1c1c;border:1px solid #6e6e6e"></div>
<div class="a" style="left:1125px;top:561px;width:11px;height:14px;background:#e6e6e6;"></div>
<div class="a" style="left:1125px;top:568px;width:11px;height:1px;background:#aaa;"></div>
<svg class="a" style="left:1128px;top:563px;" width="6" height="11" viewBox="0 0 6 11"><path d="M0 3 L2.5 0 L5 3 Z M0 8 L5 8 L2.5 11 Z" fill="#444"/></svg>
<div class="t" style="left:1103.3px;top:563.0px;font-size:9.5px;color:#f2c318;font-weight:bold;">0.60</div>
<div class="a" style="left:1066px;top:593px;width:172px;height:15px;border:1px solid #5a5a5a;background:#232323"></div>
<div class="t" style="left:1077.5px;top:596.2px;font-size:8.5px;color:#e0e0e0;transform:scaleX(1.010);transform-origin:0 0;">Metal</div>
<svg class="a" style="left:1209px;top:596px;" width="10" height="10" viewBox="0 0 10 10"><circle cx="5" cy="5" r="3.5" fill="none" stroke="#e8c030" stroke-width="1"/><path d="M5 1.5 V8.5 M1.5 5 H8.5" stroke="#e8c030" stroke-width="1"/></svg>
<div class="a" style="left:0px;top:638px;width:1280px;height:44px;background:#2b2b2b;"></div>
<div class="a" style="left:9px;top:638px;width:1039px;height:31px;background:#1f1f1f;"></div>
<div class="a" style="left:1037px;top:638px;width:11px;height:31px;background:#1a1a1a;"></div>
<div class="a" style="left:9px;top:669px;width:1039px;height:2px;background:#4a4a4a;"></div>
<div class="a" style="left:9px;top:671px;width:1039px;height:11px;background:#1c1c1c;"></div>
<svg class="a" style="left:0px;top:638px;" width="10" height="44" viewBox="0 0 10 44"><circle cx="4.5" cy="16.5" r="0.9" fill="#666"/><circle cx="4.5" cy="20.5" r="0.9" fill="#666"/><circle cx="4.5" cy="24.5" r="0.9" fill="#666"/><circle cx="4.5" cy="28.5" r="0.9" fill="#666"/></svg>
<div class="t" style="left:9.5px;top:640.5px;font-size:8.5px;color:#e4e4e4;transform:scaleX(0.915);transform-origin:0 0;">Command: _Delete</div>
<div class="t" style="left:9.5px;top:650.5px;font-size:8.5px;color:#e4e4e4;transform:scaleX(0.907);transform-origin:0 0;">Deleted 21 objects.</div>
<div class="t" style="left:9.5px;top:660.5px;font-size:8.5px;color:#e4e4e4;transform:scaleX(0.890);transform-origin:0 0;">Creating meshes... Press Esc to cancel</div>
<div class="t" style="left:9.5px;top:671.0px;font-size:8.5px;color:#f0f0f0;font-weight:bold;transform:scaleX(0.901);transform-origin:0 0;">Command:</div>
<div class="a" style="left:1038px;top:671px;width:9px;height:11px;border:1px solid #7a7a7a;background:#1c1c1c"></div>
<svg class="a" style="left:1039px;top:672px;" width="8" height="10" viewBox="0 0 8 10"><path d="M1.5 4 L4 1.5 L6.5 4 Z M1.5 6 L6.5 6 L4 8.5 Z" fill="#e0e0e0"/><path d="M0 5 H8" stroke="#7a7a7a" stroke-width="0.8"/></svg>
<div class="a" style="left:1048px;top:638px;width:9px;height:44px;background:#2b2b2b;"></div>
<svg class="a" style="left:1048px;top:638px;" width="9" height="44" viewBox="0 0 9 44"><circle cx="4.5" cy="16.5" r="0.9" fill="#777"/><circle cx="4.5" cy="20.5" r="0.9" fill="#777"/><circle cx="4.5" cy="24.5" r="0.9" fill="#777"/><circle cx="4.5" cy="28.5" r="0.9" fill="#777"/></svg>
<div class="a" style="left:1057px;top:638px;width:223px;height:44px;background:#242424;"></div>
<div class="a" style="left:1059px;top:638px;width:1px;height:44px;background:#2c2c2c;"></div>
<svg class="a" style="left:1088.5px;top:645.5px;" width="15" height="13" viewBox="0 0 15 13"><rect x="0.7" y="0.7" width="13.6" height="11.6" rx="3" fill="#262e4a" stroke="#3a56c8" stroke-width="1.2"/><path d="M5 10 L11 2" stroke="#d8d8d8" stroke-width="1.3"/><path d="M2 8.5 L7 11" stroke="#bbb" stroke-width="1.3"/><path d="M1.5 9 Q7 13 13 11" stroke="#6a7ab8" stroke-width="1" fill="none"/></svg>
<svg class="a" style="left:1142.5px;top:645.5px;" width="15" height="13" viewBox="0 0 15 13"><rect x="0.7" y="0.7" width="13.6" height="11.6" rx="3" fill="#262e4a" stroke="#3a56c8" stroke-width="1.2"/><path d="M2.5 3.5 Q2.5 2 4 2 L12 2 L12 7.5 L7 8.5 L3 8 Z" fill="#d0d0d0"/><path d="M8 8 L11 12" stroke="#ddd" stroke-width="1.5"/></svg>
<svg class="a" style="left:1192.5px;top:645.5px;" width="15" height="13" viewBox="0 0 15 13"><rect x="0.7" y="0.7" width="13.6" height="11.6" rx="3" fill="#262e4a" stroke="#3a56c8" stroke-width="1.2"/><rect x="3.5" y="2.5" width="8" height="8" fill="#8a8a8a" stroke="#cfcfcf" stroke-width="0.8"/><path d="M3.5 4.5 H11.5" stroke="#cfcfcf" stroke-width="0.8"/></svg>
<svg class="a" style="left:1240.5px;top:645.5px;" width="15" height="13" viewBox="0 0 15 13"><rect x="0.7" y="0.7" width="13.6" height="11.6" rx="3" fill="#262e4a" stroke="#3a56c8" stroke-width="1.2"/><rect x="3" y="5" width="9" height="5.5" fill="#9a9a9a" stroke="#cfcfcf" stroke-width="0.7"/><circle cx="7.5" cy="7.7" r="1.8" fill="none" stroke="#eee" stroke-width="0.9"/><path d="M4 2 L5.5 4 M11 2 L9.5 4 M7.5 1.5 V3.5" stroke="#e0e0e0" stroke-width="0.9"/></svg>
<div class="t" style="left:1073.0px;top:660.6px;font-size:8.8px;color:#e8e8e8;transform:scaleX(0.871);transform-origin:0 0;">Design Setup</div>
<div class="t" style="left:1132.0px;top:660.6px;font-size:8.8px;color:#e8e8e8;transform:scaleX(0.956);transform-origin:0 0;">Modelling</div>
<div class="t" style="left:1184.5px;top:660.6px;font-size:8.8px;color:#e8e8e8;transform:scaleX(0.876);transform-origin:0 0;">Reports</div>
<div class="t" style="left:1230.0px;top:660.6px;font-size:8.8px;color:#e8e8e8;transform:scaleX(0.887);transform-origin:0 0;">Rendering</div>
<div class="a" style="left:0px;top:682px;width:1280px;height:17px;background:#2e2e2e;"></div>
<div class="a" style="left:0px;top:698px;width:1280px;height:1px;background:#252525;"></div>
<svg class="a" style="left:5px;top:684px;" width="11" height="12" viewBox="0 0 11 12"><rect x="0.5" y="0.5" width="9" height="10" fill="none" stroke="#d8d8d8" stroke-width="1.3"/><rect x="1" y="1" width="3" height="9" fill="#d8d8d8"/></svg>
<div class="t" style="left:27.0px;top:685.5px;font-size:8.5px;color:#b8b8b8;transform:scaleX(0.897);transform-origin:0 0;">CPlane</div>
<div class="t" style="left:115.6px;top:685.5px;font-size:8.5px;color:#b8b8b8;transform:scaleX(0.897);transform-origin:0 0;">x 3.840</div>
<div class="t" style="left:144.7px;top:685.5px;font-size:8.5px;color:#b8b8b8;transform:scaleX(0.897);transform-origin:0 0;">y 6.492</div>
<div class="t" style="left:174.0px;top:685.5px;font-size:8.5px;color:#b8b8b8;transform:scaleX(0.917);transform-origin:0 0;">z 0</div>
<div class="t" style="left:249.0px;top:685.5px;font-size:8.5px;color:#b8b8b8;transform:scaleX(0.960);transform-origin:0 0;">Millimeters</div>
<div class="a" style="left:305px;top:684.5px;width:11px;height:11px;background:#2fbf8f;border:1px solid #c8c8c8"></div>
<div class="t" style="left:319.0px;top:685.5px;font-size:8.5px;color:#b8b8b8;transform:scaleX(0.902);transform-origin:0 0;">Curve Layer1</div>
<div class="t" style="left:437.0px;top:685.5px;font-size:8.5px;color:#b8b8b8;transform:scaleX(0.915);transform-origin:0 0;">Grid Snap</div>
<div class="t" style="left:485.0px;top:685.5px;font-size:8.5px;color:#b8b8b8;transform:scaleX(0.941);transform-origin:0 0;">Ortho</div>
<div class="a" style="left:514px;top:684px;width:33px;height:13px;background:#3d5296;"></div>
<div class="t" style="left:518.5px;top:685.5px;font-size:8.5px;color:#ffffff;font-weight:bold;transform:scaleX(0.924);transform-origin:0 0;">Planar</div>
<div class="t" style="left:555.0px;top:685.5px;font-size:8.5px;color:#b8b8b8;transform:scaleX(0.918);transform-origin:0 0;">Osnap</div>
<div class="a" style="left:586px;top:684px;width:50px;height:13px;background:#3d5296;"></div>
<div class="t" style="left:590.0px;top:685.5px;font-size:8.5px;color:#ffffff;font-weight:bold;transform:scaleX(0.907);transform-origin:0 0;">SmartTrack</div>
<div class="a" style="left:640px;top:684px;width:75px;height:13px;background:#3d5296;"></div>
<div class="t" style="left:644.5px;top:685.5px;font-size:8.5px;color:#ffffff;font-weight:bold;transform:scaleX(0.932);transform-origin:0 0;">Gumball (CPlane)</div>
<svg class="a" style="left:722px;top:685px;" width="7" height="10" viewBox="0 0 7 10"><rect x="0.5" y="4" width="6" height="5" fill="#e0e0e0"/><path d="M1.8 4 V2.5 A1.7 1.7 0 0 1 5.2 2.5 V4" stroke="#e0e0e0" stroke-width="1" fill="none"/></svg>
<div class="t" style="left:735.0px;top:685.5px;font-size:8.5px;color:#b8b8b8;transform:scaleX(0.921);transform-origin:0 0;">Auto CPlane (Object)</div>
<div class="t" style="left:825.5px;top:685.5px;font-size:8.5px;color:#b8b8b8;transform:scaleX(0.925);transform-origin:0 0;">Record History</div>
<div class="a" style="left:887px;top:684px;width:28px;height:13px;background:#3d5296;"></div>
<div class="t" style="left:890.5px;top:685.5px;font-size:8.5px;color:#ffffff;font-weight:bold;transform:scaleX(1.011);transform-origin:0 0;">Filter</div>
<div class="t" style="left:925.0px;top:685.5px;font-size:8.5px;color:#b8b8b8;transform:scaleX(0.923);transform-origin:0 0;">Absolute tolerance: 0.001</div>
<svg class="a" style="left:1265px;top:684px;" width="12" height="12" viewBox="0 0 12 12"><rect x="0.5" y="0.5" width="10" height="10" fill="none" stroke="#ddd" stroke-width="1.2"/><rect x="6" y="1" width="4" height="9" fill="#ddd"/></svg>
<div class="a" style="left:595px;top:578px;width:90px;height:79px;background:rgba(22,22,22,0.93);border-radius:3px;box-shadow:0 0 3px rgba(0,0,0,0.4)"></div>
<svg class="a" style="left:619px;top:596px;" width="42" height="42" viewBox="0 0 42 42"><g stroke="#ffffff" stroke-width="1.7" fill="none" stroke-linejoin="round"><path d="M1.2 7 L6 1.6 L33 1.6 L38.6 7 L38.6 37.6 Q38.6 39.2 37 39.2 L2.8 39.2 Q1.2 39.2 1.2 37.6 Z"/><path d="M6.8 2 V29.5 H33.9 V2"/><path d="M6.8 29.5 L1.8 38.6 M33.9 29.5 L38 38.6"/></g></svg>
<div class="t" style="left:631.0px;top:605.6px;font-size:12px;color:#ffffff;font-weight:bold;">FN</div></div></body></html>
